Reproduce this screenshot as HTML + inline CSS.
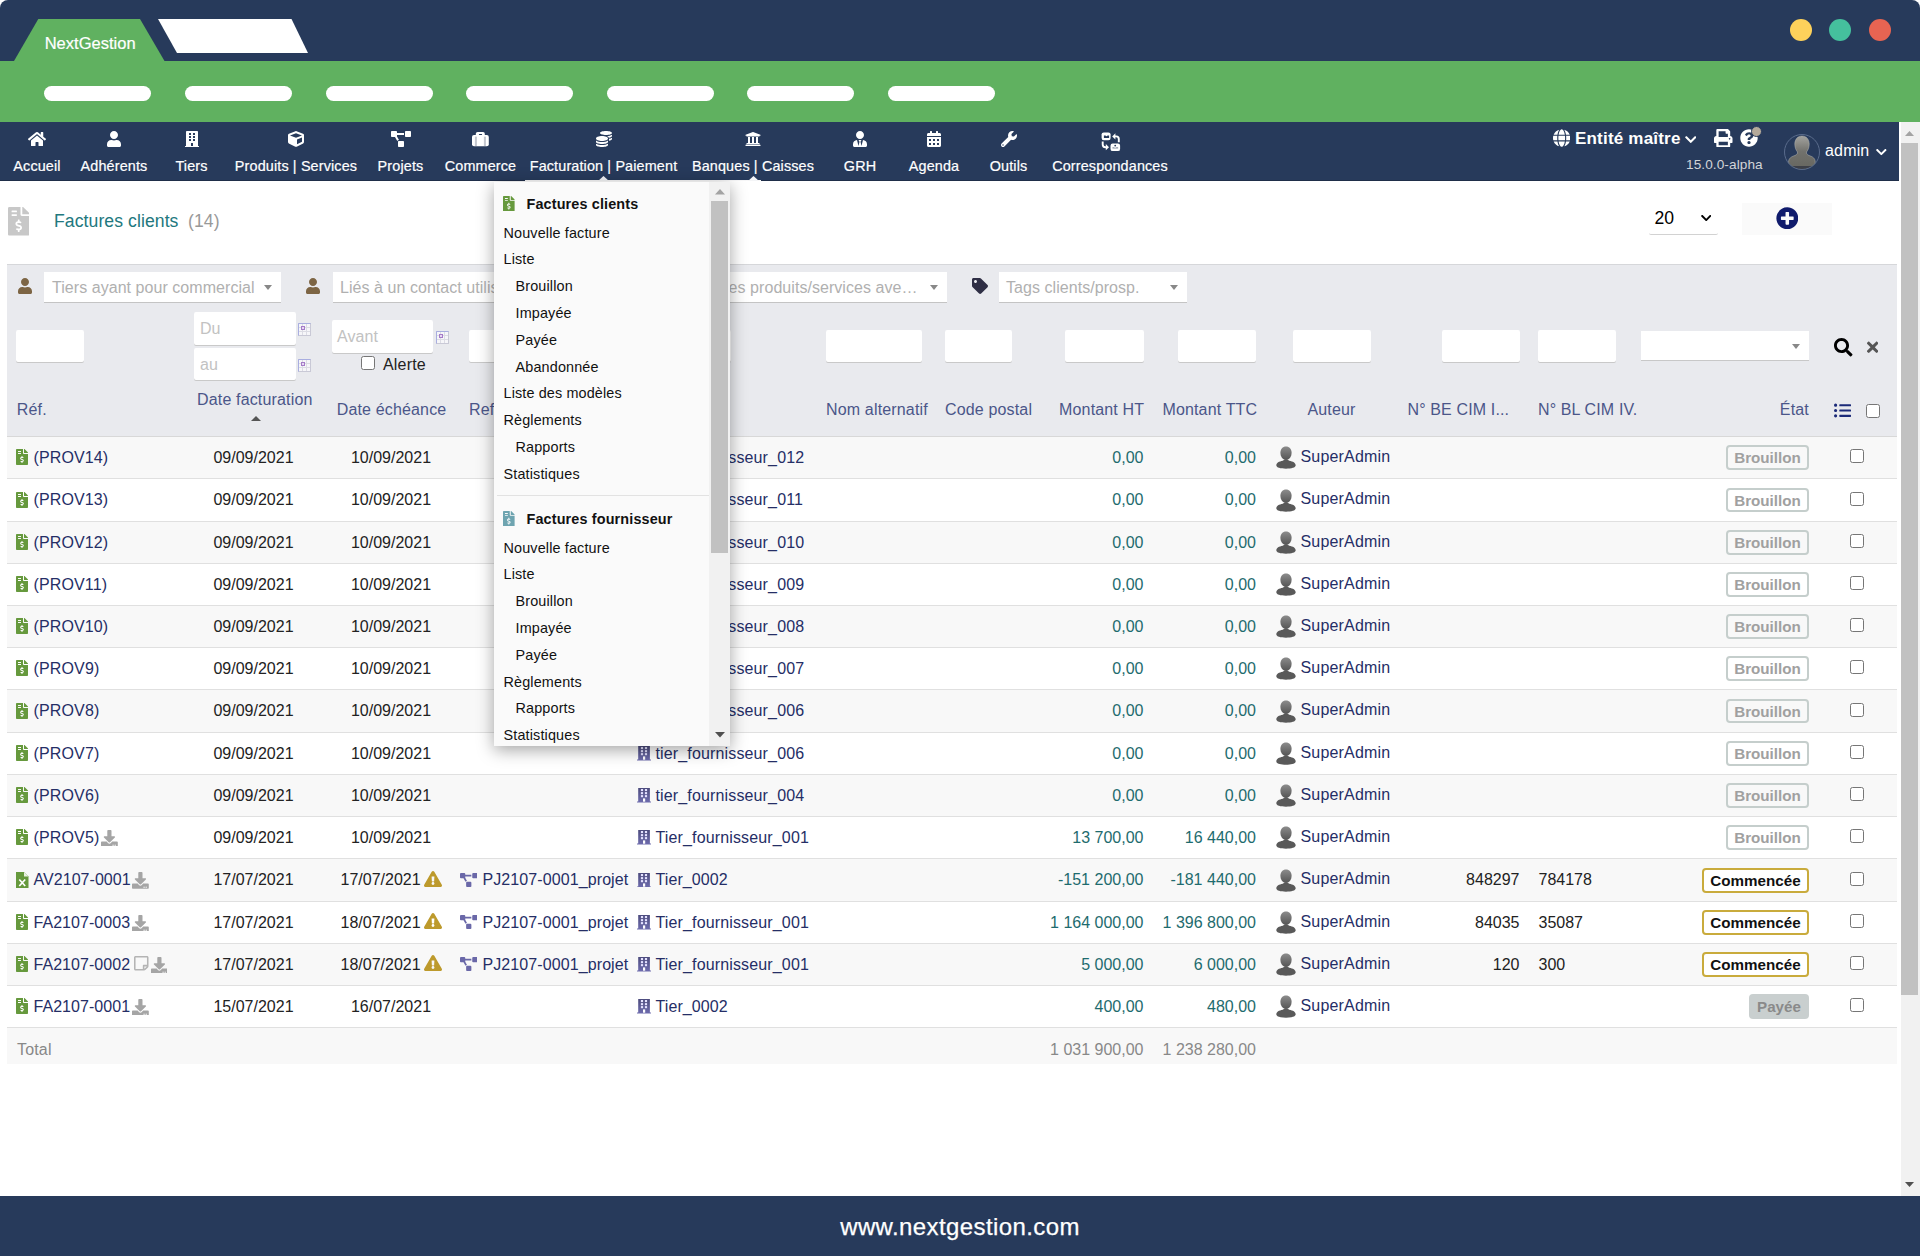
<!DOCTYPE html>
<html><head><meta charset="utf-8"><title>NextGestion</title><style>
*{box-sizing:border-box}
html,body{margin:0;padding:0}
body{width:1920px;height:1256px;overflow:hidden;position:relative;background:#fff;font-family:"Liberation Sans",sans-serif;font-size:16px;color:#000}
.a{position:absolute;display:block}
.t{position:absolute;white-space:nowrap;line-height:1.15}
.pill{position:absolute;top:86px;width:107px;height:15px;border-radius:8px;background:#fff}
.inp{position:absolute;background:#fff;border-radius:2px;box-shadow:0 1px 0 #c9c9c9}
.sel{position:absolute;background:#fff;border-bottom:1px solid #c4c4c4}
.tri{position:absolute;width:0;height:0;border-left:4.5px solid transparent;border-right:4.5px solid transparent;border-top:5px solid #888}
.cb{position:absolute;width:14px;height:14px;border:1px solid #767676;border-radius:2.5px;background:#fff}
.badge{position:absolute;height:24px;border-radius:4px;font-weight:bold;font-size:15.2px;line-height:21px;text-align:center;white-space:nowrap}
</style></head><body>
<div class="a" style="left:0;top:0;width:1920px;height:61px;background:#273a5b;border-radius:8px 8px 0 0"></div>
<svg class="a" style="left:0;top:0" width="320" height="62"><polygon points="14,61 38.3,19 140,19 164.5,61" fill="#60b160"/><polygon points="158,19 291.5,19 308,53 177,53" fill="#fff"/></svg>
<span class="t" style="left:44.7px;top:34.07px;font-size:16.5px;color:#fff;letter-spacing:0.02px;-webkit-text-stroke:0.2px #fff;">NextGestion</span>
<div class="a" style="left:0;top:61px;width:1920px;height:61px;background:#60b160"></div>
<div class="pill" style="left:44px"></div>
<div class="pill" style="left:185px"></div>
<div class="pill" style="left:326px"></div>
<div class="pill" style="left:466px"></div>
<div class="pill" style="left:607px"></div>
<div class="pill" style="left:747px"></div>
<div class="pill" style="left:888px"></div>
<div class="a" style="left:1790px;top:19px;width:22px;height:22px;border-radius:50%;background:#fdd15b"></div>
<div class="a" style="left:1829px;top:19px;width:22px;height:22px;border-radius:50%;background:#45c09d"></div>
<div class="a" style="left:1869px;top:19px;width:22px;height:22px;border-radius:50%;background:#e76452"></div>
<div class="a" style="left:0;top:122px;width:1899px;height:59px;background:#273a5b;border-bottom:1px solid #1f2e49"></div>
<svg class="a" style="left:28.0px;top:131px" width="18.00" height="16" viewBox="0 0 576 512"><path fill="#fff" d="M280.37 148.26L96 300.11V464a16 16 0 0 0 16 16l112.06-.29a16 16 0 0 0 15.92-16V368a16 16 0 0 1 16-16h64a16 16 0 0 1 16 16v95.64a16 16 0 0 0 16 16.05L464 480a16 16 0 0 0 16-16V300L295.67 148.26a12.19 12.19 0 0 0-15.3 0zM571.6 251.47L488 182.56V44.05a12 12 0 0 0-12-12h-56a12 12 0 0 0-12 12v72.61L318.47 43a48 48 0 0 0-61 0L4.34 251.47a12 12 0 0 0-1.6 16.9l25.5 31A12 12 0 0 0 45.15 301l235.22-193.74a12.19 12.19 0 0 1 15.3 0L530.9 301a12 12 0 0 0 16.9-1.6l25.5-31a12 12 0 0 0-1.7-16.93z"/></svg>
<span class="t" style="left:37px;transform:translateX(-50%);top:158.07px;font-size:14.4px;color:#fff;letter-spacing:0.14px;-webkit-text-stroke:0.2px #fff;">Accueil</span>
<svg class="a" style="left:107.0px;top:131px" width="14.00" height="16" viewBox="0 0 448 512"><path fill="#fff" d="M224 256c70.7 0 128-57.3 128-128S294.7 0 224 0 96 57.3 96 128s57.3 128 128 128zm89.6 32h-16.7c-22.2 10.2-46.9 16-72.9 16s-50.6-5.8-72.9-16h-16.7C60.2 288 0 348.2 0 422.4V464c0 26.5 21.5 48 48 48h352c26.5 0 48-21.5 48-48v-41.6c0-74.2-60.2-134.4-134.4-134.4z"/></svg>
<span class="t" style="left:114px;transform:translateX(-50%);top:158.07px;font-size:14.4px;color:#fff;letter-spacing:0.14px;-webkit-text-stroke:0.2px #fff;">Adhérents</span>
<svg class="a" style="left:184.5px;top:131px" width="14.00" height="16" viewBox="0 0 448 512"><path fill="#fff" d="M436 480h-20V24c0-13.255-10.745-24-24-24H56C42.745 0 32 10.745 32 24v456H12c-6.627 0-12 5.373-12 12v20h448v-20c0-6.627-5.373-12-12-12zM128 76c0-6.627 5.373-12 12-12h40c6.627 0 12 5.373 12 12v40c0 6.627-5.373 12-12 12h-40c-6.627 0-12-5.373-12-12V76zm0 96c0-6.627 5.373-12 12-12h40c6.627 0 12 5.373 12 12v40c0 6.627-5.373 12-12 12h-40c-6.627 0-12-5.373-12-12v-40zm52 148h-40c-6.627 0-12-5.373-12-12v-40c0-6.627 5.373-12 12-12h40c6.627 0 12 5.373 12 12v40c0 6.627-5.373 12-12 12zm76 160h-64v-84c0-6.627 5.373-12 12-12h40c6.627 0 12 5.373 12 12v84zm64-172c0 6.627-5.373 12-12 12h-40c-6.627 0-12-5.373-12-12v-40c0-6.627 5.373-12 12-12h40c6.627 0 12 5.373 12 12v40zm0-96c0 6.627-5.373 12-12 12h-40c-6.627 0-12-5.373-12-12v-40c0-6.627 5.373-12 12-12h40c6.627 0 12 5.373 12 12v40zm0-96c0 6.627-5.373 12-12 12h-40c-6.627 0-12-5.373-12-12V76c0-6.627 5.373-12 12-12h40c6.627 0 12 5.373 12 12v40z"/></svg>
<span class="t" style="left:191.5px;transform:translateX(-50%);top:158.07px;font-size:14.4px;color:#fff;letter-spacing:0.14px;-webkit-text-stroke:0.2px #fff;">Tiers</span>
<svg class="a" style="left:288.0px;top:131px" width="16.00" height="16" viewBox="0 0 512 512"><path fill="#fff" d="M239.1 6.3l-208 78c-18.7 7-31.1 25-31.1 45v225.1c0 18.2 10.3 34.8 26.5 42.9l208 104c13.5 6.8 29.4 6.8 42.9 0l208-104c16.3-8.1 26.5-24.8 26.5-42.9V129.3c0-20-12.4-37.9-31.1-44.9l-208-78C262 2.2 250 2.2 239.1 6.3zM256 68.4l192 72v1.1l-192 78-192-78v-1.1l192-72zm32 356V275.5l160-65v133.9l-160 80z"/></svg>
<span class="t" style="left:296px;transform:translateX(-50%);top:158.07px;font-size:14.4px;color:#fff;letter-spacing:0.14px;-webkit-text-stroke:0.2px #fff;">Produits | Services</span>
<svg class="a" style="left:390.5px;top:131px" width="20.00" height="16" viewBox="0 0 640 512"><path fill="#fff" d="M384 320H256c-17.67 0-32 14.33-32 32v128c0 17.67 14.33 32 32 32h128c17.67 0 32-14.33 32-32V352c0-17.67-14.33-32-32-32zM192 32c0-17.67-14.33-32-32-32H32C14.33 0 0 14.33 0 32v128c0 17.670 14.33 32 32 32h95.72l73.16 128.04C211.98 300.98 232.4 288 256 288h.28L192 175.51V128h224V64H192V32zM608 0H480c-17.67 0-32 14.33-32 32v128c0 17.67 14.33 32 32 32h128c17.67 0 32-14.33 32-32V32c0-17.67-14.33-32-32-32z"/></svg>
<span class="t" style="left:400.5px;transform:translateX(-50%);top:158.07px;font-size:14.4px;color:#fff;letter-spacing:0.14px;-webkit-text-stroke:0.2px #fff;">Projets</span>
<span class="t" style="left:480.5px;transform:translateX(-50%);top:158.07px;font-size:14.4px;color:#fff;letter-spacing:0.14px;-webkit-text-stroke:0.2px #fff;">Commerce</span>
<svg class="a" style="left:595.5px;top:131px" width="16.00" height="16" viewBox="0 0 512 512"><path fill="#fff" d="M0 405.3V448c0 35.3 86 64 192 64s192-28.7 192-64v-42.7C342.7 434.4 267.2 448 192 448S41.3 434.4 0 405.3zM320 128c106 0 192-28.7 192-64S426 0 320 0 128 28.7 128 64s86 64 192 64zM0 300.4V352c0 35.3 86 64 192 64s192-28.7 192-64v-51.6c-41.3 34-116.9 51.6-192 51.6S41.3 334.4 0 300.4zm416 11c57.3-11.1 96-31.7 96-55.4v-42.7c-23.2 16.4-57.3 27.6-96 34.5v63.6zM192 160C86 160 0 195.8 0 240s86 80 192 80 192-35.8 192-80-86-80-192-80zm219.3 56.3c60-10.8 100.7-32 100.7-56.3v-42.7c-35.5 25.1-96.5 38.6-160.7 41.8 29.5 14.3 51.2 33.5 60 57.2z"/></svg>
<span class="t" style="left:603.5px;transform:translateX(-50%);top:158.07px;font-size:14.4px;color:#fff;letter-spacing:0.14px;-webkit-text-stroke:0.2px #fff;">Facturation | Paiement</span>
<svg class="a" style="left:745.0px;top:131px" width="16.00" height="16" viewBox="0 0 512 512"><path fill="#fff" d="M496 128v16a8 8 0 0 1-8 8h-24v12c0 6.627-5.373 12-12 12H60c-6.627 0-12-5.373-12-12v-12H24a8 8 0 0 1-8-8v-16a8 8 0 0 1 4.941-7.392l232-88a7.996 7.996 0 0 1 6.118 0l232 88A8 8 0 0 1 496 128zm-24 304H40c-13.255 0-24 10.745-24 24v16a8 8 0 0 0 8 8h464a8 8 0 0 0 8-8v-16c0-13.255-10.745-24-24-24zM96 192v192H60c-6.627 0-12 5.373-12 12v20h416v-20c0-6.627-5.373-12-12-12h-36V192h-64v192h-64V192h-64v192h-64V192H96z"/></svg>
<span class="t" style="left:753px;transform:translateX(-50%);top:158.07px;font-size:14.4px;color:#fff;letter-spacing:0.14px;-webkit-text-stroke:0.2px #fff;">Banques | Caisses</span>
<svg class="a" style="left:853.0px;top:131px" width="14.00" height="16" viewBox="0 0 448 512"><path fill="#fff" d="M224 256c70.7 0 128-57.3 128-128S294.7 0 224 0 96 57.3 96 128s57.3 128 128 128zm95.8 32.6L272 480l-32-136 32-56h-96l32 56-32 136-47.8-191.4C56.9 292 0 350.3 0 422.4V464c0 26.5 21.5 48 48 48h352c26.5 0 48-21.5 48-48v-41.6c0-72.1-56.9-130.4-128.2-133.8z"/></svg>
<span class="t" style="left:860px;transform:translateX(-50%);top:158.07px;font-size:14.4px;color:#fff;letter-spacing:0.14px;-webkit-text-stroke:0.2px #fff;">GRH</span>
<svg class="a" style="left:927.0px;top:131px" width="14.00" height="16" viewBox="0 0 448 512"><path fill="#fff" d="M0 464c0 26.5 21.5 48 48 48h352c26.5 0 48-21.5 48-48V192H0v272zm320-196c0-6.6 5.4-12 12-12h40c6.6 0 12 5.4 12 12v40c0 6.6-5.4 12-12 12h-40c-6.6 0-12-5.4-12-12v-40zm0 128c0-6.6 5.4-12 12-12h40c6.6 0 12 5.4 12 12v40c0 6.6-5.4 12-12 12h-40c-6.6 0-12-5.4-12-12v-40zM192 268c0-6.6 5.4-12 12-12h40c6.6 0 12 5.4 12 12v40c0 6.6-5.4 12-12 12h-40c-6.6 0-12-5.4-12-12v-40zm0 128c0-6.6 5.4-12 12-12h40c6.6 0 12 5.4 12 12v40c0 6.6-5.4 12-12 12h-40c-6.6 0-12-5.4-12-12v-40zM64 268c0-6.6 5.4-12 12-12h40c6.6 0 12 5.4 12 12v40c0 6.6-5.4 12-12 12H76c-6.6 0-12-5.4-12-12v-40zm0 128c0-6.6 5.4-12 12-12h40c6.6 0 12 5.4 12 12v40c0 6.6-5.4 12-12 12H76c-6.6 0-12-5.4-12-12v-40zM400 64h-48V16c0-8.8-7.200-16-16-16h-32c-8.8 0-16 7.2-16 16v48H160V16c0-8.8-7.2-16-16-16h-32c-8.8 0-16 7.2-16 16v48H48C21.5 64 0 85.5 0 112v48h448v-48c0-26.5-21.5-48-48-48z"/></svg>
<span class="t" style="left:934px;transform:translateX(-50%);top:158.07px;font-size:14.4px;color:#fff;letter-spacing:0.14px;-webkit-text-stroke:0.2px #fff;">Agenda</span>
<svg class="a" style="left:1000.5px;top:131px" width="16.00" height="16" viewBox="0 0 512 512"><path fill="#fff" d="M507.73 109.1c-2.24-9.03-13.54-12.090-20.12-5.51l-74.36 74.36-67.88-11.31-11.31-67.88 74.36-74.36c6.62-6.62 3.43-17.9-5.66-20.16-47.38-11.74-99.55.91-136.58 37.93-39.64 39.640-50.55 97.1-34.05 147.2L18.74 402.76c-24.99 24.99-24.99 65.51 0 90.5 24.99 24.99 65.51 24.99 90.5 0l213.21-213.21c50.12 16.71 107.47 5.68 147.37-34.22 37.07-37.07 49.7-89.32 37.91-136.73zM64 472c-13.25 0-24-10.75-24-24 0-13.26 10.75-24 24-24s24 10.74 24 24c0 13.25-10.75 24-24 24z"/></svg>
<span class="t" style="left:1008.5px;transform:translateX(-50%);top:158.07px;font-size:14.4px;color:#fff;letter-spacing:0.14px;-webkit-text-stroke:0.2px #fff;">Outils</span>
<span class="t" style="left:1110px;transform:translateX(-50%);top:158.07px;font-size:14.4px;color:#fff;letter-spacing:0.14px;-webkit-text-stroke:0.2px #fff;">Correspondances</span>
<svg class="a" style="left:472.1px;top:131.9px" width="17" height="15" viewBox="0 0 17 15"><rect x="0" y="2.9" width="16.8" height="11.3" rx="2" fill="#fff"/><rect x="3.8" y="0" width="9" height="6" rx="1.8" fill="#fff"/><rect x="6.9" y="2.1" width="3.2" height="1" rx="0.5" fill="#273a5b"/><rect x="2.9" y="4.6" width="2" height="9.4" fill="#c3c6ce"/><rect x="11.9" y="4.6" width="2" height="9.4" fill="#c3c6ce"/></svg>
<svg class="a" style="left:1095px;top:126px" width="30" height="30" viewBox="0 0 30 30"><g fill="#fff"><rect x="6.6" y="6.4" width="9" height="7.8" rx="2.2"/><rect x="15.5" y="17.6" width="9.6" height="7.5" rx="2.2"/><path d="M17.2 10.4l3.2-3.1v6.2z"/><path d="M14 21.2l-3.2-3.1v6.2z"/></g><g fill="#273a5b"><path d="M8.9 9.6h1.6q1 1.3 2 0h1.6v2.3H8.9z"/><circle cx="20.2" cy="19.6" r="0.9"/><path d="M17.5 21.3h1.6q1.1 1 2.2 0h1.8v1.3h-5.6z" opacity="0.55"/></g><g fill="none" stroke="#fff" stroke-width="1.9"><path d="M23.8 16.2V13q0-2.6-2.6-2.6h-1.4"/><path d="M7.7 15.6v2.9q0 2.7 2.6 2.7h1.3"/></g></svg>
<div class="a" style="left:525px;top:180px;width:236px;height:1px;background:#f7f7f8"></div>
<svg class="a" style="left:597.5px;top:176px" width="11" height="5"><polygon points="0,5 5.5,0 11,5" fill="#f4f5f7"/></svg>
<svg class="a" style="left:748px;top:176px" width="11" height="5"><polygon points="0,5 5.5,0 11,5" fill="#f4f5f7"/></svg>
<svg class="a" style="left:1552.5px;top:129.2px" width="17.44" height="18" viewBox="0 0 496 512"><path fill="#fff" d="M336.5 160C322 70.7 287.8 8 248 8s-74 62.7-88.5 152h177zM152 256c0 22.2 1.2 43.5 3.3 64h185.3c2.1-20.5 3.3-41.8 3.3-64s-1.2-43.5-3.3-64H155.3c-2.1 20.5-3.3 41.8-3.3 64zm324.7-96c-28.6-67.9-86.5-120.4-158-141.6 24.4 33.8 41.2 84.7 50 141.6h108zM177.2 18.4C105.8 39.6 47.8 92.1 19.3 160h108c8.7-56.9 25.5-107.8 49.9-141.6zM487.4 192H372.7c2.1 21 3.3 42.5 3.3 64s-1.2 43-3.3 64h114.6c5.5-20.5 8.6-41.8 8.6-64s-3.1-43.5-8.5-64zM120 256c0-21.5 1.2-43 3.3-64H8.6C3.2 212.5 0 233.8 0 256s3.2 43.5 8.6 64h114.6c-2-21-3.2-42.5-3.2-64zm39.5 96c14.5 89.3 48.7 152 88.5 152s74-62.7 88.5-152h-177zm159.3 141.6c71.4-21.2 129.4-73.7 158-141.6h-108c-8.8 56.9-25.6 107.8-50 141.6zM19.3 352c28.6 67.9 86.5 120.4 158 141.6-24.4-33.8-41.2-84.7-50-141.6h-108z"/></svg>
<span class="t" style="left:1575px;top:129.22px;font-size:17px;color:#fff;font-weight:bold;letter-spacing:0.2px;">Entité maître</span>
<svg class="a" style="left:1684.5px;top:133.4px" width="11.55" height="13.2" viewBox="0 0 448 512"><path fill="#fff" d="M207.029 381.476L12.686 187.132c-9.373-9.373-9.373-24.569 0-33.941l22.667-22.667c9.357-9.357 24.522-9.375 33.901-.04L224 284.505l154.745-154.021c9.379-9.335 24.544-9.317 33.901.04l22.667 22.667c9.373 9.373 9.373 24.569 0 33.941L240.971 381.476c-9.373 9.372-24.569 9.372-33.942 0z"/></svg>
<svg class="a" style="left:1714px;top:128.9px" width="18.50" height="18.5" viewBox="0 0 512 512"><path fill="#fff" d="M448 192V77.25c0-8.49-3.37-16.62-9.37-22.63L393.37 9.37c-6-6-14.14-9.37-22.63-9.37H96C78.33 0 64 14.33 64 32v160c-35.35 0-64 28.65-64 64v112c0 8.84 7.16 16 16 16h48v96c0 17.67 14.33 32 32 32h320c17.67 0 32-14.330 32-32v-96h48c8.84 0 16-7.16 16-16V256c0-35.35-28.65-64-64-64zm-64 256H128v-96h256v96zm0-224H128V64h192v48c0 8.84 7.16 16 16 16h48v96zm48 72c-13.25 0-24-10.75-24-24 0-13.26 10.75-24 24-24s24 10.74 24 24c0 13.25-10.75 24-24 24z"/></svg>
<svg class="a" style="left:1740px;top:129.2px" width="18.00" height="18" viewBox="0 0 512 512"><path fill="#fff" d="M504 256c0 136.997-111.043 248-248 248S8 392.997 8 256C8 119.083 119.043 8 256 8s248 111.083 248 248zM262.655 90c-54.497 0-89.255 22.957-116.549 63.758-3.536 5.286-2.353 12.415 2.715 16.258l34.699 26.31c5.205 3.947 12.621 3.008 16.665-2.122 17.864-22.658 30.113-35.797 57.303-35.797 20.429 0 45.698 13.148 45.698 32.958 0 14.976-12.363 22.667-32.534 33.976C247.128 238.528 216 254.941 216 296v4c0 6.627 5.373 12 12 12h56c6.627 0 12-5.373 12-12v-1.333c0-28.462 83.186-29.647 83.186-106.667 0-58.002-60.165-102-116.531-102zM256 338c-25.365 0-46 20.635-46 46 0 25.364 20.635 46 46 46s46-20.636 46-46c0-25.365-20.635-46-46-46z"/></svg>
<div class="a" style="left:1751px;top:126px;width:11px;height:11px;border-radius:50%;background:#b4a99a;border:1px solid #273a5b"></div>
<span class="t" style="left:1686px;top:157.29px;font-size:13.6px;color:#d2d4d8;letter-spacing:0.096px;">15.0.0-alpha</span>
<svg class="a" style="left:1784px;top:134px" width="36" height="36" viewBox="0 0 36 36"><defs><clipPath id="cc"><circle cx="18" cy="18" r="17.6"/></clipPath><linearGradient id="ga" x1="0" y1="0" x2="0" y2="1"><stop offset="0" stop-color="#a3a39f"/><stop offset="0.45" stop-color="#72726d"/><stop offset="1" stop-color="#66665f"/></linearGradient></defs><g clip-path="url(#cc)"><path d="M18 2C22.5 2 25.2 5.6 25.2 10C25.2 13.5 24 16.2 22.5 18C22.2 19.5 23 20.6 25 21.5C29 22.7 31.2 24.5 31.2 28V36H4.6V28C4.6 24.5 7 22.7 11 21.5C13 20.6 13.8 19.5 13.5 18C12 16.2 10.8 13.5 10.8 10C10.8 5.6 13.5 2 18 2Z" fill="url(#ga)" stroke="#b8b8b4" stroke-width="0.5"/><rect x="4" y="32" width="28" height="4" fill="#3d4048"/></g><circle cx="18" cy="18" r="17.5" fill="none" stroke="#5a6c8c" stroke-width="1"/></svg>
<span class="t" style="left:1825px;top:141.52px;font-size:16px;color:#fff;letter-spacing:0.170px;">admin</span>
<svg class="a" style="left:1876px;top:145.6px" width="10.67" height="12.2" viewBox="0 0 448 512"><path fill="#fff" d="M207.029 381.476L12.686 187.132c-9.373-9.373-9.373-24.569 0-33.941l22.667-22.667c9.357-9.357 24.522-9.375 33.901-.04L224 284.505l154.745-154.021c9.379-9.335 24.544-9.317 33.901.04l22.667 22.667c9.373 9.373 9.373 24.569 0 33.941L240.971 381.476c-9.373 9.372-24.569 9.372-33.942 0z"/></svg>
<div class="a" style="left:0;top:1196px;width:1920px;height:60px;background:#273a5b"></div>
<span class="t" style="left:960px;transform:translateX(-50%);top:1212.78px;font-size:24px;color:#fff;letter-spacing:0.4px;-webkit-text-stroke:0.25px #fff;">www.nextgestion.com</span>
<div class="a" style="left:1901px;top:122px;width:19px;height:1074px;background:#f1f1f1"></div>
<div class="a" style="left:1901px;top:143px;width:17px;height:852px;background:#c1c1c1"></div>
<svg class="a" style="left:1905px;top:130.5px" width="9" height="5"><polygon points="0,5 4.5,0 9,5" fill="#a3a3a3"/></svg>
<svg class="a" style="left:1905px;top:1182px" width="9" height="5"><polygon points="0,0 4.5,5 9,0" fill="#505050"/></svg>
<svg class="a" style="left:8px;top:207.2px" width="21.45" height="28.6" viewBox="0 0 384 512"><path fill="#c8c8c8" d="M377 105L279.1 7c-4.5-4.5-10.6-7-17-7H256v128h128v-6.1c0-6.3-2.5-12.4-7-16.9zm-153 31V0H24C10.7 0 0 10.7 0 24v464c0 13.3 10.7 24 24 24h336c13.3 0 24-10.7 24-24V160H248c-13.2 0-24-10.8-24-24zM64 72c0-4.42 3.58-8 8-8h80c4.42 0 8 3.58 8 8v16c0 4.42-3.58 8-8 8H72c-4.42 0-8-3.58-8-8V72zm0 80v-16c0-4.42 3.58-8 8-8h80c4.42 0 8 3.58 8 8v16c0 4.42-3.58 8-8 8H72c-4.42 0-8-3.58-8-8zm144 263.88V440c0 4.42-3.58 8-8 8h-16c-4.42 0-8-3.58-8-8v-24.29c-11.29-.58-22.27-4.52-31.37-11.35-3.9-2.93-4.1-8.77-.57-12.14l11.75-11.21c2.77-2.64 6.89-2.76 10.13-.73 3.87 2.42 8.26 3.72 12.820 3.72h28.11c6.5 0 11.8-5.92 11.8-13.19 0-5.95-3.61-11.19-8.77-12.73l-45-13.5c-18.59-5.58-31.58-23.42-31.58-43.39 0-24.52 19.05-44.44 42.67-45.07V232c0-4.42 3.58-8 8-8h16c4.42 0 8 3.58 8 8v24.29c11.29.58 22.27 4.51 31.37 11.35 3.9 2.93 4.1 8.77.57 12.14l-11.75 11.21c-2.77 2.64-6.89 2.76-10.13.73-3.87-2.43-8.26-3.72-12.82-3.72h-28.11c-6.5 0-11.8 5.92-11.8 13.19 0 5.95 3.61 11.19 8.77 12.73l45 13.5c18.59 5.58 31.58 23.42 31.58 43.39 0 24.53-19.05 44.44-42.67 45.07z"/></svg>
<span class="t" style="left:54px;top:211.17px;font-size:17.6px;color:#22787e;letter-spacing:0.08px;">Factures clients</span>
<span class="t" style="left:188px;top:211.17px;font-size:17.6px;color:#999;letter-spacing:0.094px;">(14)</span>
<div class="a" style="left:1649px;top:204px;width:69px;height:31px;border-bottom:1px solid #d2d2d2;border-radius:0 0 2px 2px"></div>
<span class="t" style="left:1654.5px;top:207.77px;font-size:17.6px;color:#000;">20</span>
<svg class="a" style="left:1700.5px;top:211.5px" width="10.50" height="12" viewBox="0 0 448 512"><path fill="#000" d="M207.029 381.476L12.686 187.132c-9.373-9.373-9.373-24.569 0-33.941l22.667-22.667c9.357-9.357 24.522-9.375 33.901-.04L224 284.505l154.745-154.021c9.379-9.335 24.544-9.317 33.901.04l22.667 22.667c9.373 9.373 9.373 24.569 0 33.941L240.971 381.476c-9.373 9.372-24.569 9.372-33.942 0z"/></svg>
<div class="a" style="left:1742px;top:203px;width:90px;height:32px;background:#fafafa"></div>
<svg class="a" style="left:1775.7px;top:206.6px" width="22.60" height="22.6" viewBox="0 0 512 512"><path fill="#101b6c" d="M256 8C119 8 8 119 8 256s111 248 248 248 248-111 248-248S393 8 256 8zm144 276c0 6.6-5.4 12-12 12h-92v92c0 6.6-5.4 12-12 12h-56c-6.6 0-12-5.4-12-12v-92h-92c-6.6 0-12-5.4-12-12v-56c0-6.6 5.4-12 12-12h92v-92c0-6.6 5.4-12 12-12h56c6.6 0 12 5.4 12 12v92h92c6.6 0 12 5.4 12 12v56z"/></svg>
<div class="a" style="left:7px;top:264px;width:1890px;height:173px;background:#e9eaee;border-top:1px solid #d6d7da;border-bottom:1px solid #d8d8d8"></div>
<svg class="a" style="left:17.5px;top:278px" width="14.00" height="16" viewBox="0 0 448 512"><path fill="#7d6544" d="M224 256c70.7 0 128-57.3 128-128S294.7 0 224 0 96 57.3 96 128s57.3 128 128 128zm89.6 32h-16.7c-22.2 10.2-46.9 16-72.9 16s-50.6-5.8-72.9-16h-16.7C60.2 288 0 348.2 0 422.4V464c0 26.5 21.5 48 48 48h352c26.5 0 48-21.5 48-48v-41.6c0-74.2-60.2-134.4-134.4-134.4z"/></svg>
<div class="sel" style="left:44px;top:272px;width:237px;height:31px"></div>
<span class="t" style="left:52px;top:278.52px;font-size:16px;color:#b0b0b0;letter-spacing:0.05px;">Tiers ayant pour commercial</span>
<div class="tri" style="left:263.5px;top:285px"></div>
<svg class="a" style="left:305.8px;top:278px" width="14.00" height="16" viewBox="0 0 448 512"><path fill="#7d6544" d="M224 256c70.7 0 128-57.3 128-128S294.7 0 224 0 96 57.3 96 128s57.3 128 128 128zm89.6 32h-16.7c-22.2 10.2-46.9 16-72.9 16s-50.6-5.8-72.9-16h-16.7C60.2 288 0 348.2 0 422.4V464c0 26.5 21.5 48 48 48h352c26.5 0 48-21.5 48-48v-41.6c0-74.2-60.2-134.4-134.4-134.4z"/></svg>
<div class="sel" style="left:333px;top:272px;width:614px;height:31px"></div>
<span class="t" style="left:340px;top:278.52px;font-size:16px;color:#b0b0b0;letter-spacing:0.05px;">Liés à un contact utilisateur</span>
<span class="t" style="right:1002.5px;top:278.52px;font-size:16px;color:#b0b0b0;letter-spacing:0.05px;">Inclure les produits/services ave…</span>
<div class="tri" style="left:930px;top:285px"></div>
<svg class="a" style="left:971.5px;top:278px" width="16.00" height="16" viewBox="0 0 512 512"><path fill="#2f2f45" d="M0 252.118V48C0 21.49 21.49 0 48 0h204.118a48 48 0 0 1 33.941 14.059l211.882 211.882c18.745 18.745 18.745 49.137 0 67.882L293.823 497.941c-18.745 18.745-49.136 18.746-67.882 0L14.059 286.059A48 48 0 0 1 0 252.118zM112 64c-26.51 0-48 21.49-48 48s21.49 48 48 48 48-21.49 48-48-21.49-48-48-48z"/></svg>
<div class="sel" style="left:999px;top:272px;width:188px;height:31px"></div>
<span class="t" style="left:1006px;top:278.52px;font-size:16px;color:#b0b0b0;letter-spacing:0.05px;">Tags clients/prosp.</span>
<div class="tri" style="left:1170px;top:285px"></div>
<div class="inp" style="left:16px;top:330px;width:68px;height:32px"></div>
<div class="inp" style="left:194px;top:312px;width:102px;height:33px"></div>
<span class="t" style="left:200px;top:320.02px;font-size:16px;color:#c2c2c2;letter-spacing:0.05px;">Du</span>
<div class="inp" style="left:194px;top:348px;width:102px;height:32px"></div>
<span class="t" style="left:200px;top:355.52px;font-size:16px;color:#c2c2c2;letter-spacing:0.05px;">au</span>
<svg class="a" style="left:298px;top:322.5px" width="13" height="13" viewBox="0 0 13 13"><rect x="0.5" y="0.5" width="12" height="12" fill="#f6f6f9" stroke="#c9c9d6"/><path d="M0.5 0.5H12.5M0.5 0.5V12.5" stroke="#a9aee0" fill="none"/><path d="M4.5 1V12M8.5 1V12M1 4.5H12M1 8.5H12" stroke="#dcdce4"/><rect x="3.5" y="3.5" width="3" height="3" fill="#e8d8f4" stroke="#a57cc8"/></svg>
<svg class="a" style="left:298px;top:358.5px" width="13" height="13" viewBox="0 0 13 13"><rect x="0.5" y="0.5" width="12" height="12" fill="#f6f6f9" stroke="#c9c9d6"/><path d="M0.5 0.5H12.5M0.5 0.5V12.5" stroke="#a9aee0" fill="none"/><path d="M4.5 1V12M8.5 1V12M1 4.5H12M1 8.5H12" stroke="#dcdce4"/><rect x="3.5" y="3.5" width="3" height="3" fill="#e8d8f4" stroke="#a57cc8"/></svg>
<div class="inp" style="left:332px;top:320px;width:101px;height:33px"></div>
<span class="t" style="left:337px;top:327.72px;font-size:16px;color:#c2c2c2;letter-spacing:0.05px;">Avant</span>
<svg class="a" style="left:435.5px;top:331px" width="13" height="13" viewBox="0 0 13 13"><rect x="0.5" y="0.5" width="12" height="12" fill="#f6f6f9" stroke="#c9c9d6"/><path d="M0.5 0.5H12.5M0.5 0.5V12.5" stroke="#a9aee0" fill="none"/><path d="M4.5 1V12M8.5 1V12M1 4.5H12M1 8.5H12" stroke="#dcdce4"/><rect x="3.5" y="3.5" width="3" height="3" fill="#e8d8f4" stroke="#a57cc8"/></svg>
<div class="cb" style="left:361px;top:356px;width:13.5px;height:13.5px"></div>
<span class="t" style="left:383px;top:355.52px;font-size:16px;color:#222;letter-spacing:0.170px;">Alerte</span>
<div class="inp" style="left:469px;top:330px;width:262px;height:32px"></div>
<div class="inp" style="left:826px;top:330px;width:96px;height:32px"></div>
<div class="inp" style="left:945px;top:330px;width:67px;height:32px"></div>
<div class="inp" style="left:1065px;top:330px;width:79px;height:32px"></div>
<div class="inp" style="left:1178px;top:330px;width:78px;height:32px"></div>
<div class="inp" style="left:1293px;top:330px;width:78px;height:32px"></div>
<div class="inp" style="left:1442px;top:330px;width:78px;height:32px"></div>
<div class="inp" style="left:1538px;top:330px;width:78px;height:32px"></div>
<div class="sel" style="left:1641px;top:331px;width:168px;height:30px;border-bottom-color:#c8c8c8"></div>
<div class="tri" style="left:1792px;top:343.5px"></div>
<svg class="a" style="left:1834px;top:338px" width="18.50" height="18.5" viewBox="0 0 512 512"><path fill="#000" d="M505 442.7L405.3 343c-4.5-4.5-10.6-7-17-7H372c27.6-35.3 44-79.7 44-128C416 93.1 322.9 0 208 0S0 93.1 0 208s93.1 208 208 208c48.3 0 92.7-16.4 128-44v16.3c0 6.4 2.5 12.5 7 17l99.7 99.7c9.4 9.4 24.6 9.4 33.9 0l28.3-28.3c9.4-9.4 9.4-24.6.1-34zM208 336c-70.7 0-128-57.2-128-128 0-70.7 57.2-128 128-128 70.7 0 128 57.2 128 128 0 70.7-57.2 128-128 128z"/></svg>
<svg class="a" style="left:1866.5px;top:338.5px" width="11.34" height="16.5" viewBox="0 0 352 512"><path fill="#555" d="M242.72 256l100.07-100.07c12.28-12.28 12.28-32.19 0-44.48l-22.24-22.24c-12.28-12.28-32.19-12.28-44.48 0L176 189.28 75.93 89.21c-12.28-12.28-32.19-12.28-44.48 0L9.21 111.45c-12.28 12.28-12.28 32.19 0 44.48L109.28 256 9.21 356.07c-12.28 12.28-12.28 32.19 0 44.48l22.24 22.24c12.28 12.28 32.2 12.28 44.48 0L176 322.72l100.07 100.07c12.28 12.28 32.2 12.28 44.48 0l22.24-22.24c12.28-12.28 12.28-32.19 0-44.48L242.72 256z"/></svg>
<span class="t" style="left:16.8px;top:401.32px;font-size:16px;color:#4b5689;letter-spacing:0.170px;">Réf.</span>
<span class="t" style="left:197px;top:390.82px;font-size:16px;color:#4b5689;letter-spacing:0.159px;">Date facturation</span>
<div class="a" style="left:251px;top:415.5px;width:0;height:0;border-left:5px solid transparent;border-right:5px solid transparent;border-bottom:5px solid #555"></div>
<span class="t" style="left:336.7px;top:401.32px;font-size:16px;color:#4b5689;letter-spacing:0.157px;">Date échéance</span>
<span class="t" style="left:469px;top:401.32px;font-size:16px;color:#4b5689;letter-spacing:0.155px;">Ref. client</span>
<span class="t" style="left:826px;top:401.32px;font-size:16px;color:#4b5689;letter-spacing:0.158px;">Nom alternatif</span>
<span class="t" style="left:945px;top:401.32px;font-size:16px;color:#4b5689;letter-spacing:0.155px;">Code postal</span>
<span class="t" style="right:775.8px;top:401.32px;font-size:16px;color:#4b5689;letter-spacing:0.153px;">Montant HT</span>
<span class="t" style="right:662.8px;top:401.32px;font-size:16px;color:#4b5689;letter-spacing:0.155px;">Montant TTC</span>
<span class="t" style="left:1331.5px;transform:translateX(-50%);top:401.32px;font-size:16px;color:#4b5689;letter-spacing:0.170px;">Auteur</span>
<span class="t" style="left:1407.5px;top:401.32px;font-size:16px;color:#4b5689;letter-spacing:0.134px;">N° BE CIM I...</span>
<span class="t" style="left:1538px;top:401.32px;font-size:16px;color:#4b5689;letter-spacing:0.131px;">N° BL CIM IV.</span>
<span class="t" style="right:111px;top:401.32px;font-size:16px;color:#4b5689;letter-spacing:0.170px;">État</span>
<svg class="a" style="left:1834px;top:401.5px" width="17.00" height="17" viewBox="0 0 512 512"><path fill="#1b2a78" d="M48 48a48 48 0 1 0 48 48 48 48 0 0 0-48-48zm0 160a48 48 0 1 0 48 48 48 48 0 0 0-48-48zm0 160a48 48 0 1 0 48 48 48 48 0 0 0-48-48zm448 16H176a16 16 0 0 0-16 16v32a16 16 0 0 0 16 16h320a16 16 0 0 0 16-16v-32a16 16 0 0 0-16-16zm0-320H176a16 16 0 0 0-16 16v32a16 16 0 0 0 16 16h320a16 16 0 0 0 16-16V80a16 16 0 0 0-16-16zm0 160H176a16 16 0 0 0-16 16v32a16 16 0 0 0 16 16h320a16 16 0 0 0 16-16v-32a16 16 0 0 0-16-16z"/></svg>
<div class="cb" style="left:1866px;top:404px"></div>
<svg width="0" height="0" style="position:absolute"><defs><linearGradient id="bg1" x1="0" y1="0" x2="0" y2="1"><stop offset="0" stop-color="#4d4c7e"/><stop offset="1" stop-color="#6e6cae"/></linearGradient><linearGradient id="avg" x1="0" y1="0" x2="0" y2="1"><stop offset="0" stop-color="#8c8c8c"/><stop offset="1" stop-color="#555"/></linearGradient></defs></svg>
<div class="a" style="left:7px;top:437px;width:1890px;height:42px;background:#f8f8f8;border-bottom:1px solid #e0e0e0"></div>
<svg class="a" style="left:16px;top:449.0px" width="12.00" height="16" viewBox="0 0 384 512"><path fill="#66993d" d="M377 105L279.1 7c-4.5-4.5-10.6-7-17-7H256v128h128v-6.1c0-6.3-2.5-12.4-7-16.9zm-153 31V0H24C10.7 0 0 10.7 0 24v464c0 13.3 10.7 24 24 24h336c13.3 0 24-10.7 24-24V160H248c-13.2 0-24-10.8-24-24zM64 72c0-4.42 3.58-8 8-8h80c4.42 0 8 3.58 8 8v16c0 4.42-3.58 8-8 8H72c-4.42 0-8-3.58-8-8V72zm0 80v-16c0-4.42 3.58-8 8-8h80c4.42 0 8 3.58 8 8v16c0 4.42-3.58 8-8 8H72c-4.42 0-8-3.58-8-8zm144 263.88V440c0 4.42-3.58 8-8 8h-16c-4.42 0-8-3.58-8-8v-24.29c-11.29-.58-22.27-4.52-31.37-11.35-3.9-2.93-4.1-8.77-.57-12.14l11.75-11.21c2.77-2.64 6.89-2.76 10.13-.73 3.87 2.42 8.26 3.72 12.820 3.72h28.11c6.5 0 11.8-5.92 11.8-13.19 0-5.95-3.61-11.19-8.77-12.73l-45-13.5c-18.59-5.58-31.58-23.42-31.58-43.39 0-24.52 19.05-44.44 42.67-45.07V232c0-4.42 3.58-8 8-8h16c4.42 0 8 3.58 8 8v24.29c11.29.58 22.27 4.51 31.37 11.35 3.9 2.93 4.1 8.77.57 12.14l-11.75 11.21c-2.77 2.64-6.89 2.76-10.13.73-3.87-2.43-8.26-3.72-12.82-3.72h-28.11c-6.5 0-11.8 5.92-11.8 13.19 0 5.95 3.61 11.19 8.77 12.73l45 13.5c18.59 5.58 31.58 23.42 31.58 43.39 0 24.53-19.05 44.44-42.67 45.07z"/></svg>
<span class="t" style="left:33.5px;top:448.52px;font-size:16px;color:#252e66;letter-spacing:0.128px;">(PROV14)</span>
<span class="t" style="left:253.5px;transform:translateX(-50%);top:448.52px;font-size:16px;color:#222;">09/09/2021</span>
<span class="t" style="left:391px;transform:translateX(-50%);top:448.52px;font-size:16px;color:#222;">10/09/2021</span>
<svg class="a" style="left:636.9px;top:450.3px" width="14.2" height="14.6" viewBox="0 0 14.2 14.6"><path d="M1.2 0H12.9V13.6H14.2V14.6H0V13.6H1.2z" fill="url(#bg1)"/><g fill="#e4e2ff"><rect x="3.9" y="1" width="2.2" height="2.1"/><rect x="7.9" y="1" width="2.2" height="2.1"/><rect x="3.9" y="4.1" width="2.2" height="2.1"/><rect x="7.9" y="4.1" width="2.2" height="2.1"/><rect x="3.9" y="7.1" width="2.2" height="2.1"/><rect x="7.9" y="7.1" width="2.2" height="2.1"/></g><rect x="6" y="10.4" width="2.2" height="3.3" fill="#fff"/></svg>
<span class="t" style="left:655.5px;top:448.52px;font-size:16px;color:#252e66;letter-spacing:0.145px;">tier_fournisseur_012</span>
<span class="t" style="right:776.5px;top:448.52px;font-size:16px;color:#1e6b6e;">0,00</span>
<span class="t" style="right:664px;top:448.52px;font-size:16px;color:#1e6b6e;">0,00</span>
<svg class="a" style="left:1275.5px;top:446.00px" width="20" height="23" viewBox="0 0 20 23"><path d="M10 0.5c3.4 0 5.6 2.6 5.6 6.2 0 3.6-2 7.2-5.6 7.2S4.4 10.3 4.4 6.7C4.4 3.1 6.6 0.5 10 0.5z" fill="url(#avg)"/><path d="M10 13.5c1.6 0 2.2 0.5 3.2 1.2C17 15.4 19.7 16.8 19.7 19.3 19.7 21.7 15.5 22.7 10 22.7S0.3 21.7 0.3 19.3C0.3 16.8 3 15.4 6.8 14.7 7.8 14 8.4 13.5 10 13.5z" fill="#595959"/></svg>
<span class="t" style="left:1300.5px;top:447.52px;font-size:16px;color:#252e66;letter-spacing:0.170px;">SuperAdmin</span>
<div class="badge" style="left:1726px;top:445.40px;width:83px;height:24.3px;border:2px solid #c5cecc;color:#a0a0a0;background:transparent">Brouillon</div>
<div class="cb" style="left:1850px;top:449.40px"></div>
<div class="a" style="left:7px;top:479px;width:1890px;height:43px;background:#fff;border-bottom:1px solid #e0e0e0"></div>
<svg class="a" style="left:16px;top:491.5px" width="12.00" height="16" viewBox="0 0 384 512"><path fill="#66993d" d="M377 105L279.1 7c-4.5-4.5-10.6-7-17-7H256v128h128v-6.1c0-6.3-2.5-12.4-7-16.9zm-153 31V0H24C10.7 0 0 10.7 0 24v464c0 13.3 10.7 24 24 24h336c13.3 0 24-10.7 24-24V160H248c-13.2 0-24-10.8-24-24zM64 72c0-4.42 3.58-8 8-8h80c4.42 0 8 3.58 8 8v16c0 4.42-3.58 8-8 8H72c-4.42 0-8-3.58-8-8V72zm0 80v-16c0-4.42 3.58-8 8-8h80c4.42 0 8 3.58 8 8v16c0 4.42-3.58 8-8 8H72c-4.42 0-8-3.58-8-8zm144 263.88V440c0 4.42-3.58 8-8 8h-16c-4.42 0-8-3.58-8-8v-24.29c-11.29-.58-22.27-4.52-31.37-11.35-3.9-2.93-4.1-8.77-.57-12.14l11.75-11.21c2.77-2.64 6.89-2.76 10.13-.73 3.87 2.42 8.26 3.72 12.820 3.72h28.11c6.5 0 11.8-5.92 11.8-13.19 0-5.95-3.61-11.19-8.77-12.73l-45-13.5c-18.59-5.58-31.58-23.42-31.58-43.39 0-24.52 19.05-44.44 42.67-45.07V232c0-4.42 3.58-8 8-8h16c4.42 0 8 3.58 8 8v24.29c11.29.58 22.27 4.51 31.37 11.35 3.9 2.93 4.1 8.77.57 12.14l-11.75 11.21c-2.77 2.64-6.89 2.76-10.13.73-3.87-2.43-8.26-3.72-12.82-3.72h-28.11c-6.5 0-11.8 5.92-11.8 13.19 0 5.95 3.61 11.19 8.77 12.73l45 13.5c18.59 5.58 31.58 23.42 31.58 43.39 0 24.53-19.05 44.44-42.67 45.07z"/></svg>
<span class="t" style="left:33.5px;top:491.02px;font-size:16px;color:#252e66;letter-spacing:0.128px;">(PROV13)</span>
<span class="t" style="left:253.5px;transform:translateX(-50%);top:491.02px;font-size:16px;color:#222;">09/09/2021</span>
<span class="t" style="left:391px;transform:translateX(-50%);top:491.02px;font-size:16px;color:#222;">10/09/2021</span>
<svg class="a" style="left:636.9px;top:492.8px" width="14.2" height="14.6" viewBox="0 0 14.2 14.6"><path d="M1.2 0H12.9V13.6H14.2V14.6H0V13.6H1.2z" fill="url(#bg1)"/><g fill="#e4e2ff"><rect x="3.9" y="1" width="2.2" height="2.1"/><rect x="7.9" y="1" width="2.2" height="2.1"/><rect x="3.9" y="4.1" width="2.2" height="2.1"/><rect x="7.9" y="4.1" width="2.2" height="2.1"/><rect x="3.9" y="7.1" width="2.2" height="2.1"/><rect x="7.9" y="7.1" width="2.2" height="2.1"/></g><rect x="6" y="10.4" width="2.2" height="3.3" fill="#fff"/></svg>
<span class="t" style="left:655.5px;top:491.02px;font-size:16px;color:#252e66;letter-spacing:0.145px;">tier_fournisseur_011</span>
<span class="t" style="right:776.5px;top:491.02px;font-size:16px;color:#1e6b6e;">0,00</span>
<span class="t" style="right:664px;top:491.02px;font-size:16px;color:#1e6b6e;">0,00</span>
<svg class="a" style="left:1275.5px;top:488.50px" width="20" height="23" viewBox="0 0 20 23"><path d="M10 0.5c3.4 0 5.6 2.6 5.6 6.2 0 3.6-2 7.2-5.6 7.2S4.4 10.3 4.4 6.7C4.4 3.1 6.6 0.5 10 0.5z" fill="url(#avg)"/><path d="M10 13.5c1.6 0 2.2 0.5 3.2 1.2C17 15.4 19.7 16.8 19.7 19.3 19.7 21.7 15.5 22.7 10 22.7S0.3 21.7 0.3 19.3C0.3 16.8 3 15.4 6.8 14.7 7.8 14 8.4 13.5 10 13.5z" fill="#595959"/></svg>
<span class="t" style="left:1300.5px;top:490.02px;font-size:16px;color:#252e66;letter-spacing:0.170px;">SuperAdmin</span>
<div class="badge" style="left:1726px;top:487.90px;width:83px;height:24.3px;border:2px solid #c5cecc;color:#a0a0a0;background:transparent">Brouillon</div>
<div class="cb" style="left:1850px;top:491.90px"></div>
<div class="a" style="left:7px;top:522px;width:1890px;height:42px;background:#f8f8f8;border-bottom:1px solid #e0e0e0"></div>
<svg class="a" style="left:16px;top:534.0px" width="12.00" height="16" viewBox="0 0 384 512"><path fill="#66993d" d="M377 105L279.1 7c-4.5-4.5-10.6-7-17-7H256v128h128v-6.1c0-6.3-2.5-12.4-7-16.9zm-153 31V0H24C10.7 0 0 10.7 0 24v464c0 13.3 10.7 24 24 24h336c13.3 0 24-10.7 24-24V160H248c-13.2 0-24-10.8-24-24zM64 72c0-4.42 3.58-8 8-8h80c4.42 0 8 3.58 8 8v16c0 4.42-3.58 8-8 8H72c-4.42 0-8-3.58-8-8V72zm0 80v-16c0-4.42 3.58-8 8-8h80c4.42 0 8 3.58 8 8v16c0 4.42-3.58 8-8 8H72c-4.42 0-8-3.58-8-8zm144 263.88V440c0 4.42-3.58 8-8 8h-16c-4.42 0-8-3.58-8-8v-24.29c-11.29-.58-22.27-4.52-31.37-11.35-3.9-2.93-4.1-8.77-.57-12.14l11.75-11.21c2.77-2.64 6.89-2.76 10.13-.73 3.87 2.42 8.26 3.72 12.820 3.72h28.11c6.5 0 11.8-5.92 11.8-13.19 0-5.95-3.61-11.19-8.77-12.73l-45-13.5c-18.59-5.58-31.58-23.42-31.58-43.39 0-24.52 19.05-44.44 42.67-45.07V232c0-4.42 3.58-8 8-8h16c4.42 0 8 3.58 8 8v24.29c11.29.58 22.27 4.51 31.37 11.35 3.9 2.93 4.1 8.77.57 12.14l-11.75 11.21c-2.77 2.64-6.89 2.76-10.13.73-3.87-2.43-8.26-3.72-12.82-3.72h-28.11c-6.5 0-11.8 5.92-11.8 13.19 0 5.95 3.61 11.19 8.77 12.73l45 13.5c18.59 5.58 31.58 23.42 31.58 43.39 0 24.53-19.05 44.44-42.67 45.07z"/></svg>
<span class="t" style="left:33.5px;top:533.52px;font-size:16px;color:#252e66;letter-spacing:0.128px;">(PROV12)</span>
<span class="t" style="left:253.5px;transform:translateX(-50%);top:533.52px;font-size:16px;color:#222;">09/09/2021</span>
<span class="t" style="left:391px;transform:translateX(-50%);top:533.52px;font-size:16px;color:#222;">10/09/2021</span>
<svg class="a" style="left:636.9px;top:535.3px" width="14.2" height="14.6" viewBox="0 0 14.2 14.6"><path d="M1.2 0H12.9V13.6H14.2V14.6H0V13.6H1.2z" fill="url(#bg1)"/><g fill="#e4e2ff"><rect x="3.9" y="1" width="2.2" height="2.1"/><rect x="7.9" y="1" width="2.2" height="2.1"/><rect x="3.9" y="4.1" width="2.2" height="2.1"/><rect x="7.9" y="4.1" width="2.2" height="2.1"/><rect x="3.9" y="7.1" width="2.2" height="2.1"/><rect x="7.9" y="7.1" width="2.2" height="2.1"/></g><rect x="6" y="10.4" width="2.2" height="3.3" fill="#fff"/></svg>
<span class="t" style="left:655.5px;top:533.52px;font-size:16px;color:#252e66;letter-spacing:0.145px;">tier_fournisseur_010</span>
<span class="t" style="right:776.5px;top:533.52px;font-size:16px;color:#1e6b6e;">0,00</span>
<span class="t" style="right:664px;top:533.52px;font-size:16px;color:#1e6b6e;">0,00</span>
<svg class="a" style="left:1275.5px;top:531.00px" width="20" height="23" viewBox="0 0 20 23"><path d="M10 0.5c3.4 0 5.6 2.6 5.6 6.2 0 3.6-2 7.2-5.6 7.2S4.4 10.3 4.4 6.7C4.4 3.1 6.6 0.5 10 0.5z" fill="url(#avg)"/><path d="M10 13.5c1.6 0 2.2 0.5 3.2 1.2C17 15.4 19.7 16.8 19.7 19.3 19.7 21.7 15.5 22.7 10 22.7S0.3 21.7 0.3 19.3C0.3 16.8 3 15.4 6.8 14.7 7.8 14 8.4 13.5 10 13.5z" fill="#595959"/></svg>
<span class="t" style="left:1300.5px;top:532.52px;font-size:16px;color:#252e66;letter-spacing:0.170px;">SuperAdmin</span>
<div class="badge" style="left:1726px;top:530.40px;width:83px;height:24.3px;border:2px solid #c5cecc;color:#a0a0a0;background:transparent">Brouillon</div>
<div class="cb" style="left:1850px;top:534.40px"></div>
<div class="a" style="left:7px;top:564px;width:1890px;height:42px;background:#fff;border-bottom:1px solid #e0e0e0"></div>
<svg class="a" style="left:16px;top:576.0px" width="12.00" height="16" viewBox="0 0 384 512"><path fill="#66993d" d="M377 105L279.1 7c-4.5-4.5-10.6-7-17-7H256v128h128v-6.1c0-6.3-2.5-12.4-7-16.9zm-153 31V0H24C10.7 0 0 10.7 0 24v464c0 13.3 10.7 24 24 24h336c13.3 0 24-10.7 24-24V160H248c-13.2 0-24-10.8-24-24zM64 72c0-4.42 3.58-8 8-8h80c4.42 0 8 3.58 8 8v16c0 4.42-3.58 8-8 8H72c-4.42 0-8-3.58-8-8V72zm0 80v-16c0-4.42 3.58-8 8-8h80c4.42 0 8 3.58 8 8v16c0 4.42-3.58 8-8 8H72c-4.42 0-8-3.58-8-8zm144 263.88V440c0 4.42-3.58 8-8 8h-16c-4.42 0-8-3.58-8-8v-24.29c-11.29-.58-22.27-4.52-31.37-11.35-3.9-2.93-4.1-8.77-.57-12.14l11.75-11.21c2.77-2.64 6.89-2.76 10.13-.73 3.87 2.42 8.26 3.72 12.820 3.72h28.11c6.5 0 11.8-5.92 11.8-13.19 0-5.95-3.61-11.19-8.77-12.73l-45-13.5c-18.59-5.58-31.58-23.42-31.58-43.39 0-24.52 19.05-44.44 42.67-45.07V232c0-4.42 3.58-8 8-8h16c4.42 0 8 3.58 8 8v24.29c11.29.58 22.27 4.51 31.37 11.35 3.9 2.93 4.1 8.77.57 12.14l-11.75 11.21c-2.77 2.64-6.89 2.76-10.13.73-3.87-2.43-8.26-3.72-12.82-3.72h-28.11c-6.5 0-11.8 5.92-11.8 13.19 0 5.95 3.61 11.19 8.77 12.73l45 13.5c18.59 5.58 31.58 23.42 31.58 43.39 0 24.53-19.05 44.44-42.67 45.07z"/></svg>
<span class="t" style="left:33.5px;top:575.52px;font-size:16px;color:#252e66;letter-spacing:0.128px;">(PROV11)</span>
<span class="t" style="left:253.5px;transform:translateX(-50%);top:575.52px;font-size:16px;color:#222;">09/09/2021</span>
<span class="t" style="left:391px;transform:translateX(-50%);top:575.52px;font-size:16px;color:#222;">10/09/2021</span>
<svg class="a" style="left:636.9px;top:577.3px" width="14.2" height="14.6" viewBox="0 0 14.2 14.6"><path d="M1.2 0H12.9V13.6H14.2V14.6H0V13.6H1.2z" fill="url(#bg1)"/><g fill="#e4e2ff"><rect x="3.9" y="1" width="2.2" height="2.1"/><rect x="7.9" y="1" width="2.2" height="2.1"/><rect x="3.9" y="4.1" width="2.2" height="2.1"/><rect x="7.9" y="4.1" width="2.2" height="2.1"/><rect x="3.9" y="7.1" width="2.2" height="2.1"/><rect x="7.9" y="7.1" width="2.2" height="2.1"/></g><rect x="6" y="10.4" width="2.2" height="3.3" fill="#fff"/></svg>
<span class="t" style="left:655.5px;top:575.52px;font-size:16px;color:#252e66;letter-spacing:0.145px;">tier_fournisseur_009</span>
<span class="t" style="right:776.5px;top:575.52px;font-size:16px;color:#1e6b6e;">0,00</span>
<span class="t" style="right:664px;top:575.52px;font-size:16px;color:#1e6b6e;">0,00</span>
<svg class="a" style="left:1275.5px;top:573.00px" width="20" height="23" viewBox="0 0 20 23"><path d="M10 0.5c3.4 0 5.6 2.6 5.6 6.2 0 3.6-2 7.2-5.6 7.2S4.4 10.3 4.4 6.7C4.4 3.1 6.6 0.5 10 0.5z" fill="url(#avg)"/><path d="M10 13.5c1.6 0 2.2 0.5 3.2 1.2C17 15.4 19.7 16.8 19.7 19.3 19.7 21.7 15.5 22.7 10 22.7S0.3 21.7 0.3 19.3C0.3 16.8 3 15.4 6.8 14.7 7.8 14 8.4 13.5 10 13.5z" fill="#595959"/></svg>
<span class="t" style="left:1300.5px;top:574.52px;font-size:16px;color:#252e66;letter-spacing:0.170px;">SuperAdmin</span>
<div class="badge" style="left:1726px;top:572.40px;width:83px;height:24.3px;border:2px solid #c5cecc;color:#a0a0a0;background:transparent">Brouillon</div>
<div class="cb" style="left:1850px;top:576.40px"></div>
<div class="a" style="left:7px;top:606px;width:1890px;height:42px;background:#f8f8f8;border-bottom:1px solid #e0e0e0"></div>
<svg class="a" style="left:16px;top:618.0px" width="12.00" height="16" viewBox="0 0 384 512"><path fill="#66993d" d="M377 105L279.1 7c-4.5-4.5-10.6-7-17-7H256v128h128v-6.1c0-6.3-2.5-12.4-7-16.9zm-153 31V0H24C10.7 0 0 10.7 0 24v464c0 13.3 10.7 24 24 24h336c13.3 0 24-10.7 24-24V160H248c-13.2 0-24-10.8-24-24zM64 72c0-4.42 3.58-8 8-8h80c4.42 0 8 3.58 8 8v16c0 4.42-3.58 8-8 8H72c-4.42 0-8-3.58-8-8V72zm0 80v-16c0-4.42 3.58-8 8-8h80c4.42 0 8 3.58 8 8v16c0 4.42-3.58 8-8 8H72c-4.42 0-8-3.58-8-8zm144 263.88V440c0 4.42-3.58 8-8 8h-16c-4.42 0-8-3.58-8-8v-24.29c-11.29-.58-22.27-4.52-31.37-11.35-3.9-2.93-4.1-8.77-.57-12.14l11.75-11.21c2.77-2.64 6.89-2.76 10.13-.73 3.87 2.42 8.26 3.72 12.820 3.72h28.11c6.5 0 11.8-5.92 11.8-13.19 0-5.95-3.61-11.19-8.77-12.73l-45-13.5c-18.59-5.58-31.58-23.42-31.58-43.39 0-24.52 19.05-44.44 42.67-45.07V232c0-4.42 3.58-8 8-8h16c4.42 0 8 3.58 8 8v24.29c11.29.58 22.27 4.51 31.37 11.35 3.9 2.93 4.1 8.77.57 12.14l-11.75 11.21c-2.77 2.64-6.89 2.76-10.13.73-3.87-2.43-8.26-3.72-12.82-3.72h-28.11c-6.5 0-11.8 5.92-11.8 13.19 0 5.95 3.61 11.19 8.77 12.73l45 13.5c18.59 5.58 31.58 23.42 31.58 43.39 0 24.53-19.05 44.44-42.67 45.07z"/></svg>
<span class="t" style="left:33.5px;top:617.52px;font-size:16px;color:#252e66;letter-spacing:0.128px;">(PROV10)</span>
<span class="t" style="left:253.5px;transform:translateX(-50%);top:617.52px;font-size:16px;color:#222;">09/09/2021</span>
<span class="t" style="left:391px;transform:translateX(-50%);top:617.52px;font-size:16px;color:#222;">10/09/2021</span>
<svg class="a" style="left:636.9px;top:619.3px" width="14.2" height="14.6" viewBox="0 0 14.2 14.6"><path d="M1.2 0H12.9V13.6H14.2V14.6H0V13.6H1.2z" fill="url(#bg1)"/><g fill="#e4e2ff"><rect x="3.9" y="1" width="2.2" height="2.1"/><rect x="7.9" y="1" width="2.2" height="2.1"/><rect x="3.9" y="4.1" width="2.2" height="2.1"/><rect x="7.9" y="4.1" width="2.2" height="2.1"/><rect x="3.9" y="7.1" width="2.2" height="2.1"/><rect x="7.9" y="7.1" width="2.2" height="2.1"/></g><rect x="6" y="10.4" width="2.2" height="3.3" fill="#fff"/></svg>
<span class="t" style="left:655.5px;top:617.52px;font-size:16px;color:#252e66;letter-spacing:0.145px;">tier_fournisseur_008</span>
<span class="t" style="right:776.5px;top:617.52px;font-size:16px;color:#1e6b6e;">0,00</span>
<span class="t" style="right:664px;top:617.52px;font-size:16px;color:#1e6b6e;">0,00</span>
<svg class="a" style="left:1275.5px;top:615.00px" width="20" height="23" viewBox="0 0 20 23"><path d="M10 0.5c3.4 0 5.6 2.6 5.6 6.2 0 3.6-2 7.2-5.6 7.2S4.4 10.3 4.4 6.7C4.4 3.1 6.6 0.5 10 0.5z" fill="url(#avg)"/><path d="M10 13.5c1.6 0 2.2 0.5 3.2 1.2C17 15.4 19.7 16.8 19.7 19.3 19.7 21.7 15.5 22.7 10 22.7S0.3 21.7 0.3 19.3C0.3 16.8 3 15.4 6.8 14.7 7.8 14 8.4 13.5 10 13.5z" fill="#595959"/></svg>
<span class="t" style="left:1300.5px;top:616.52px;font-size:16px;color:#252e66;letter-spacing:0.170px;">SuperAdmin</span>
<div class="badge" style="left:1726px;top:614.40px;width:83px;height:24.3px;border:2px solid #c5cecc;color:#a0a0a0;background:transparent">Brouillon</div>
<div class="cb" style="left:1850px;top:618.40px"></div>
<div class="a" style="left:7px;top:648px;width:1890px;height:42px;background:#fff;border-bottom:1px solid #e0e0e0"></div>
<svg class="a" style="left:16px;top:660.0px" width="12.00" height="16" viewBox="0 0 384 512"><path fill="#66993d" d="M377 105L279.1 7c-4.5-4.5-10.6-7-17-7H256v128h128v-6.1c0-6.3-2.5-12.4-7-16.9zm-153 31V0H24C10.7 0 0 10.7 0 24v464c0 13.3 10.7 24 24 24h336c13.3 0 24-10.7 24-24V160H248c-13.2 0-24-10.8-24-24zM64 72c0-4.42 3.58-8 8-8h80c4.42 0 8 3.58 8 8v16c0 4.42-3.58 8-8 8H72c-4.42 0-8-3.58-8-8V72zm0 80v-16c0-4.42 3.58-8 8-8h80c4.42 0 8 3.58 8 8v16c0 4.42-3.58 8-8 8H72c-4.42 0-8-3.58-8-8zm144 263.88V440c0 4.42-3.58 8-8 8h-16c-4.42 0-8-3.58-8-8v-24.29c-11.29-.58-22.27-4.52-31.37-11.35-3.9-2.93-4.1-8.77-.57-12.14l11.75-11.21c2.77-2.64 6.89-2.76 10.13-.73 3.87 2.42 8.26 3.72 12.820 3.72h28.11c6.5 0 11.8-5.92 11.8-13.19 0-5.95-3.61-11.19-8.77-12.73l-45-13.5c-18.59-5.58-31.58-23.42-31.58-43.39 0-24.52 19.05-44.44 42.67-45.07V232c0-4.42 3.58-8 8-8h16c4.42 0 8 3.58 8 8v24.29c11.29.58 22.27 4.51 31.37 11.35 3.9 2.93 4.1 8.77.57 12.14l-11.75 11.21c-2.77 2.64-6.89 2.76-10.13.73-3.87-2.43-8.26-3.72-12.82-3.72h-28.11c-6.5 0-11.8 5.92-11.8 13.19 0 5.95 3.61 11.19 8.77 12.73l45 13.5c18.59 5.58 31.58 23.42 31.58 43.39 0 24.53-19.05 44.44-42.67 45.07z"/></svg>
<span class="t" style="left:33.5px;top:659.52px;font-size:16px;color:#252e66;letter-spacing:0.146px;">(PROV9)</span>
<span class="t" style="left:253.5px;transform:translateX(-50%);top:659.52px;font-size:16px;color:#222;">09/09/2021</span>
<span class="t" style="left:391px;transform:translateX(-50%);top:659.52px;font-size:16px;color:#222;">10/09/2021</span>
<svg class="a" style="left:636.9px;top:661.3px" width="14.2" height="14.6" viewBox="0 0 14.2 14.6"><path d="M1.2 0H12.9V13.6H14.2V14.6H0V13.6H1.2z" fill="url(#bg1)"/><g fill="#e4e2ff"><rect x="3.9" y="1" width="2.2" height="2.1"/><rect x="7.9" y="1" width="2.2" height="2.1"/><rect x="3.9" y="4.1" width="2.2" height="2.1"/><rect x="7.9" y="4.1" width="2.2" height="2.1"/><rect x="3.9" y="7.1" width="2.2" height="2.1"/><rect x="7.9" y="7.1" width="2.2" height="2.1"/></g><rect x="6" y="10.4" width="2.2" height="3.3" fill="#fff"/></svg>
<span class="t" style="left:655.5px;top:659.52px;font-size:16px;color:#252e66;letter-spacing:0.145px;">tier_fournisseur_007</span>
<span class="t" style="right:776.5px;top:659.52px;font-size:16px;color:#1e6b6e;">0,00</span>
<span class="t" style="right:664px;top:659.52px;font-size:16px;color:#1e6b6e;">0,00</span>
<svg class="a" style="left:1275.5px;top:657.00px" width="20" height="23" viewBox="0 0 20 23"><path d="M10 0.5c3.4 0 5.6 2.6 5.6 6.2 0 3.6-2 7.2-5.6 7.2S4.4 10.3 4.4 6.7C4.4 3.1 6.6 0.5 10 0.5z" fill="url(#avg)"/><path d="M10 13.5c1.6 0 2.2 0.5 3.2 1.2C17 15.4 19.7 16.8 19.7 19.3 19.7 21.7 15.5 22.7 10 22.7S0.3 21.7 0.3 19.3C0.3 16.8 3 15.4 6.8 14.7 7.8 14 8.4 13.5 10 13.5z" fill="#595959"/></svg>
<span class="t" style="left:1300.5px;top:658.52px;font-size:16px;color:#252e66;letter-spacing:0.170px;">SuperAdmin</span>
<div class="badge" style="left:1726px;top:656.40px;width:83px;height:24.3px;border:2px solid #c5cecc;color:#a0a0a0;background:transparent">Brouillon</div>
<div class="cb" style="left:1850px;top:660.40px"></div>
<div class="a" style="left:7px;top:690px;width:1890px;height:43px;background:#f8f8f8;border-bottom:1px solid #e0e0e0"></div>
<svg class="a" style="left:16px;top:702.5px" width="12.00" height="16" viewBox="0 0 384 512"><path fill="#66993d" d="M377 105L279.1 7c-4.5-4.5-10.6-7-17-7H256v128h128v-6.1c0-6.3-2.5-12.4-7-16.9zm-153 31V0H24C10.7 0 0 10.7 0 24v464c0 13.3 10.7 24 24 24h336c13.3 0 24-10.7 24-24V160H248c-13.2 0-24-10.8-24-24zM64 72c0-4.42 3.58-8 8-8h80c4.42 0 8 3.58 8 8v16c0 4.42-3.58 8-8 8H72c-4.42 0-8-3.58-8-8V72zm0 80v-16c0-4.42 3.58-8 8-8h80c4.42 0 8 3.58 8 8v16c0 4.42-3.58 8-8 8H72c-4.42 0-8-3.58-8-8zm144 263.88V440c0 4.42-3.58 8-8 8h-16c-4.42 0-8-3.58-8-8v-24.29c-11.29-.58-22.27-4.52-31.37-11.35-3.9-2.93-4.1-8.77-.57-12.14l11.75-11.21c2.77-2.64 6.89-2.76 10.13-.73 3.87 2.42 8.26 3.72 12.820 3.72h28.11c6.5 0 11.8-5.92 11.8-13.19 0-5.95-3.61-11.19-8.77-12.73l-45-13.5c-18.59-5.58-31.58-23.42-31.58-43.39 0-24.52 19.05-44.44 42.67-45.07V232c0-4.42 3.58-8 8-8h16c4.42 0 8 3.58 8 8v24.29c11.29.58 22.27 4.51 31.37 11.35 3.9 2.93 4.1 8.77.57 12.14l-11.75 11.21c-2.77 2.64-6.89 2.76-10.13.73-3.87-2.43-8.26-3.72-12.82-3.72h-28.11c-6.5 0-11.8 5.92-11.8 13.19 0 5.95 3.61 11.19 8.77 12.73l45 13.5c18.59 5.58 31.58 23.42 31.58 43.39 0 24.53-19.05 44.44-42.67 45.07z"/></svg>
<span class="t" style="left:33.5px;top:702.02px;font-size:16px;color:#252e66;letter-spacing:0.146px;">(PROV8)</span>
<span class="t" style="left:253.5px;transform:translateX(-50%);top:702.02px;font-size:16px;color:#222;">09/09/2021</span>
<span class="t" style="left:391px;transform:translateX(-50%);top:702.02px;font-size:16px;color:#222;">10/09/2021</span>
<svg class="a" style="left:636.9px;top:703.8px" width="14.2" height="14.6" viewBox="0 0 14.2 14.6"><path d="M1.2 0H12.9V13.6H14.2V14.6H0V13.6H1.2z" fill="url(#bg1)"/><g fill="#e4e2ff"><rect x="3.9" y="1" width="2.2" height="2.1"/><rect x="7.9" y="1" width="2.2" height="2.1"/><rect x="3.9" y="4.1" width="2.2" height="2.1"/><rect x="7.9" y="4.1" width="2.2" height="2.1"/><rect x="3.9" y="7.1" width="2.2" height="2.1"/><rect x="7.9" y="7.1" width="2.2" height="2.1"/></g><rect x="6" y="10.4" width="2.2" height="3.3" fill="#fff"/></svg>
<span class="t" style="left:655.5px;top:702.02px;font-size:16px;color:#252e66;letter-spacing:0.145px;">tier_fournisseur_006</span>
<span class="t" style="right:776.5px;top:702.02px;font-size:16px;color:#1e6b6e;">0,00</span>
<span class="t" style="right:664px;top:702.02px;font-size:16px;color:#1e6b6e;">0,00</span>
<svg class="a" style="left:1275.5px;top:699.50px" width="20" height="23" viewBox="0 0 20 23"><path d="M10 0.5c3.4 0 5.6 2.6 5.6 6.2 0 3.6-2 7.2-5.6 7.2S4.4 10.3 4.4 6.7C4.4 3.1 6.6 0.5 10 0.5z" fill="url(#avg)"/><path d="M10 13.5c1.6 0 2.2 0.5 3.2 1.2C17 15.4 19.7 16.8 19.7 19.3 19.7 21.7 15.5 22.7 10 22.7S0.3 21.7 0.3 19.3C0.3 16.8 3 15.4 6.8 14.7 7.8 14 8.4 13.5 10 13.5z" fill="#595959"/></svg>
<span class="t" style="left:1300.5px;top:701.02px;font-size:16px;color:#252e66;letter-spacing:0.170px;">SuperAdmin</span>
<div class="badge" style="left:1726px;top:698.90px;width:83px;height:24.3px;border:2px solid #c5cecc;color:#a0a0a0;background:transparent">Brouillon</div>
<div class="cb" style="left:1850px;top:702.90px"></div>
<div class="a" style="left:7px;top:733px;width:1890px;height:42px;background:#fff;border-bottom:1px solid #e0e0e0"></div>
<svg class="a" style="left:16px;top:745.0px" width="12.00" height="16" viewBox="0 0 384 512"><path fill="#66993d" d="M377 105L279.1 7c-4.5-4.5-10.6-7-17-7H256v128h128v-6.1c0-6.3-2.5-12.4-7-16.9zm-153 31V0H24C10.7 0 0 10.7 0 24v464c0 13.3 10.7 24 24 24h336c13.3 0 24-10.7 24-24V160H248c-13.2 0-24-10.8-24-24zM64 72c0-4.42 3.58-8 8-8h80c4.42 0 8 3.58 8 8v16c0 4.42-3.58 8-8 8H72c-4.42 0-8-3.58-8-8V72zm0 80v-16c0-4.42 3.58-8 8-8h80c4.42 0 8 3.58 8 8v16c0 4.42-3.58 8-8 8H72c-4.42 0-8-3.58-8-8zm144 263.88V440c0 4.42-3.58 8-8 8h-16c-4.42 0-8-3.58-8-8v-24.29c-11.29-.58-22.27-4.52-31.37-11.35-3.9-2.93-4.1-8.77-.57-12.14l11.75-11.21c2.77-2.64 6.89-2.76 10.13-.73 3.87 2.42 8.26 3.72 12.820 3.72h28.11c6.5 0 11.8-5.92 11.8-13.19 0-5.95-3.61-11.19-8.77-12.73l-45-13.5c-18.59-5.58-31.58-23.42-31.58-43.39 0-24.52 19.05-44.44 42.67-45.07V232c0-4.42 3.58-8 8-8h16c4.42 0 8 3.58 8 8v24.29c11.29.58 22.27 4.51 31.37 11.35 3.9 2.93 4.1 8.77.57 12.14l-11.75 11.21c-2.77 2.64-6.89 2.76-10.13.73-3.87-2.43-8.26-3.72-12.82-3.72h-28.11c-6.5 0-11.8 5.92-11.8 13.19 0 5.95 3.61 11.19 8.77 12.73l45 13.5c18.59 5.58 31.58 23.42 31.58 43.39 0 24.53-19.05 44.44-42.67 45.07z"/></svg>
<span class="t" style="left:33.5px;top:744.52px;font-size:16px;color:#252e66;letter-spacing:0.146px;">(PROV7)</span>
<span class="t" style="left:253.5px;transform:translateX(-50%);top:744.52px;font-size:16px;color:#222;">09/09/2021</span>
<span class="t" style="left:391px;transform:translateX(-50%);top:744.52px;font-size:16px;color:#222;">10/09/2021</span>
<svg class="a" style="left:636.9px;top:746.3px" width="14.2" height="14.6" viewBox="0 0 14.2 14.6"><path d="M1.2 0H12.9V13.6H14.2V14.6H0V13.6H1.2z" fill="url(#bg1)"/><g fill="#e4e2ff"><rect x="3.9" y="1" width="2.2" height="2.1"/><rect x="7.9" y="1" width="2.2" height="2.1"/><rect x="3.9" y="4.1" width="2.2" height="2.1"/><rect x="7.9" y="4.1" width="2.2" height="2.1"/><rect x="3.9" y="7.1" width="2.2" height="2.1"/><rect x="7.9" y="7.1" width="2.2" height="2.1"/></g><rect x="6" y="10.4" width="2.2" height="3.3" fill="#fff"/></svg>
<span class="t" style="left:655.5px;top:744.52px;font-size:16px;color:#252e66;letter-spacing:0.145px;">tier_fournisseur_006</span>
<span class="t" style="right:776.5px;top:744.52px;font-size:16px;color:#1e6b6e;">0,00</span>
<span class="t" style="right:664px;top:744.52px;font-size:16px;color:#1e6b6e;">0,00</span>
<svg class="a" style="left:1275.5px;top:742.00px" width="20" height="23" viewBox="0 0 20 23"><path d="M10 0.5c3.4 0 5.6 2.6 5.6 6.2 0 3.6-2 7.2-5.6 7.2S4.4 10.3 4.4 6.7C4.4 3.1 6.6 0.5 10 0.5z" fill="url(#avg)"/><path d="M10 13.5c1.6 0 2.2 0.5 3.2 1.2C17 15.4 19.7 16.8 19.7 19.3 19.7 21.7 15.5 22.7 10 22.7S0.3 21.7 0.3 19.3C0.3 16.8 3 15.4 6.8 14.7 7.8 14 8.4 13.5 10 13.5z" fill="#595959"/></svg>
<span class="t" style="left:1300.5px;top:743.52px;font-size:16px;color:#252e66;letter-spacing:0.170px;">SuperAdmin</span>
<div class="badge" style="left:1726px;top:741.40px;width:83px;height:24.3px;border:2px solid #c5cecc;color:#a0a0a0;background:transparent">Brouillon</div>
<div class="cb" style="left:1850px;top:745.40px"></div>
<div class="a" style="left:7px;top:775px;width:1890px;height:42px;background:#f8f8f8;border-bottom:1px solid #e0e0e0"></div>
<svg class="a" style="left:16px;top:787.0px" width="12.00" height="16" viewBox="0 0 384 512"><path fill="#66993d" d="M377 105L279.1 7c-4.5-4.5-10.6-7-17-7H256v128h128v-6.1c0-6.3-2.5-12.4-7-16.9zm-153 31V0H24C10.7 0 0 10.7 0 24v464c0 13.3 10.7 24 24 24h336c13.3 0 24-10.7 24-24V160H248c-13.2 0-24-10.8-24-24zM64 72c0-4.42 3.58-8 8-8h80c4.42 0 8 3.58 8 8v16c0 4.42-3.58 8-8 8H72c-4.42 0-8-3.58-8-8V72zm0 80v-16c0-4.42 3.58-8 8-8h80c4.42 0 8 3.58 8 8v16c0 4.42-3.58 8-8 8H72c-4.42 0-8-3.58-8-8zm144 263.88V440c0 4.42-3.58 8-8 8h-16c-4.42 0-8-3.58-8-8v-24.29c-11.29-.58-22.27-4.52-31.37-11.35-3.9-2.93-4.1-8.77-.57-12.14l11.75-11.21c2.77-2.64 6.89-2.76 10.13-.73 3.87 2.42 8.26 3.72 12.820 3.72h28.11c6.5 0 11.8-5.92 11.8-13.19 0-5.95-3.61-11.19-8.77-12.73l-45-13.5c-18.59-5.58-31.58-23.42-31.58-43.39 0-24.52 19.05-44.44 42.67-45.07V232c0-4.42 3.58-8 8-8h16c4.42 0 8 3.58 8 8v24.29c11.29.58 22.27 4.51 31.37 11.35 3.9 2.93 4.1 8.77.57 12.14l-11.75 11.21c-2.77 2.64-6.89 2.76-10.13.73-3.87-2.43-8.26-3.72-12.82-3.72h-28.11c-6.5 0-11.8 5.92-11.8 13.19 0 5.95 3.61 11.19 8.77 12.73l45 13.5c18.59 5.58 31.58 23.42 31.58 43.39 0 24.53-19.05 44.44-42.67 45.07z"/></svg>
<span class="t" style="left:33.5px;top:786.52px;font-size:16px;color:#252e66;letter-spacing:0.146px;">(PROV6)</span>
<span class="t" style="left:253.5px;transform:translateX(-50%);top:786.52px;font-size:16px;color:#222;">09/09/2021</span>
<span class="t" style="left:391px;transform:translateX(-50%);top:786.52px;font-size:16px;color:#222;">10/09/2021</span>
<svg class="a" style="left:636.9px;top:788.3px" width="14.2" height="14.6" viewBox="0 0 14.2 14.6"><path d="M1.2 0H12.9V13.6H14.2V14.6H0V13.6H1.2z" fill="url(#bg1)"/><g fill="#e4e2ff"><rect x="3.9" y="1" width="2.2" height="2.1"/><rect x="7.9" y="1" width="2.2" height="2.1"/><rect x="3.9" y="4.1" width="2.2" height="2.1"/><rect x="7.9" y="4.1" width="2.2" height="2.1"/><rect x="3.9" y="7.1" width="2.2" height="2.1"/><rect x="7.9" y="7.1" width="2.2" height="2.1"/></g><rect x="6" y="10.4" width="2.2" height="3.3" fill="#fff"/></svg>
<span class="t" style="left:655.5px;top:786.52px;font-size:16px;color:#252e66;letter-spacing:0.145px;">tier_fournisseur_004</span>
<span class="t" style="right:776.5px;top:786.52px;font-size:16px;color:#1e6b6e;">0,00</span>
<span class="t" style="right:664px;top:786.52px;font-size:16px;color:#1e6b6e;">0,00</span>
<svg class="a" style="left:1275.5px;top:784.00px" width="20" height="23" viewBox="0 0 20 23"><path d="M10 0.5c3.4 0 5.6 2.6 5.6 6.2 0 3.6-2 7.2-5.6 7.2S4.4 10.3 4.4 6.7C4.4 3.1 6.6 0.5 10 0.5z" fill="url(#avg)"/><path d="M10 13.5c1.6 0 2.2 0.5 3.2 1.2C17 15.4 19.7 16.8 19.7 19.3 19.7 21.7 15.5 22.7 10 22.7S0.3 21.7 0.3 19.3C0.3 16.8 3 15.4 6.8 14.7 7.8 14 8.4 13.5 10 13.5z" fill="#595959"/></svg>
<span class="t" style="left:1300.5px;top:785.52px;font-size:16px;color:#252e66;letter-spacing:0.170px;">SuperAdmin</span>
<div class="badge" style="left:1726px;top:783.40px;width:83px;height:24.3px;border:2px solid #c5cecc;color:#a0a0a0;background:transparent">Brouillon</div>
<div class="cb" style="left:1850px;top:787.40px"></div>
<div class="a" style="left:7px;top:817px;width:1890px;height:42px;background:#fff;border-bottom:1px solid #e0e0e0"></div>
<svg class="a" style="left:16px;top:829.0px" width="12.00" height="16" viewBox="0 0 384 512"><path fill="#66993d" d="M377 105L279.1 7c-4.5-4.5-10.6-7-17-7H256v128h128v-6.1c0-6.3-2.5-12.4-7-16.9zm-153 31V0H24C10.7 0 0 10.7 0 24v464c0 13.3 10.7 24 24 24h336c13.3 0 24-10.7 24-24V160H248c-13.2 0-24-10.8-24-24zM64 72c0-4.42 3.58-8 8-8h80c4.42 0 8 3.58 8 8v16c0 4.42-3.58 8-8 8H72c-4.42 0-8-3.58-8-8V72zm0 80v-16c0-4.42 3.58-8 8-8h80c4.42 0 8 3.58 8 8v16c0 4.42-3.58 8-8 8H72c-4.42 0-8-3.58-8-8zm144 263.88V440c0 4.42-3.58 8-8 8h-16c-4.42 0-8-3.58-8-8v-24.29c-11.29-.58-22.27-4.52-31.37-11.35-3.9-2.93-4.1-8.77-.57-12.14l11.75-11.21c2.77-2.64 6.89-2.76 10.13-.73 3.87 2.42 8.26 3.72 12.820 3.72h28.11c6.5 0 11.8-5.92 11.8-13.19 0-5.95-3.61-11.19-8.77-12.73l-45-13.5c-18.59-5.58-31.58-23.42-31.58-43.39 0-24.52 19.05-44.44 42.67-45.07V232c0-4.42 3.58-8 8-8h16c4.42 0 8 3.58 8 8v24.29c11.29.58 22.27 4.51 31.37 11.35 3.9 2.93 4.1 8.77.57 12.14l-11.75 11.21c-2.77 2.64-6.89 2.76-10.13.73-3.87-2.43-8.26-3.72-12.82-3.72h-28.11c-6.5 0-11.8 5.92-11.8 13.19 0 5.95 3.61 11.19 8.77 12.73l45 13.5c18.59 5.58 31.58 23.42 31.58 43.39 0 24.53-19.05 44.44-42.67 45.07z"/></svg>
<span class="t" style="left:33.5px;top:828.52px;font-size:16px;color:#252e66;letter-spacing:0.146px;">(PROV5)</span>
<svg class="a" style="left:101px;top:829.5px" width="16.80" height="16.8" viewBox="0 0 512 512"><path fill="#a5a5a5" d="M216 0h80c13.3 0 24 10.7 24 24v168h87.7c17.8 0 26.7 21.5 14.1 34.1L269.7 378.3c-7.5 7.5-19.8 7.5-27.3 0L90.1 226.1c-12.6-12.6-3.7-34.1 14.1-34.1H192V24c0-13.3 10.7-24 24-24zm296 376v112c0 13.3-10.7 24-24 24H24c-13.3 0-24-10.7-24-24V376c0-13.3 10.7-24 24-24h146.7l49 49c20.1 20.1 52.5 20.1 72.6 0l49-49H488c13.3 0 24 10.7 24 24zm-124 88c0-11-9-20-20-20s-20 9-20 20 9 20 20 20 20-9 20-20zm64 0c0-11-9-20-20-20s-20 9-20 20 9 20 20 20 20-9 20-20z"/></svg>
<span class="t" style="left:253.5px;transform:translateX(-50%);top:828.52px;font-size:16px;color:#222;">09/09/2021</span>
<span class="t" style="left:391px;transform:translateX(-50%);top:828.52px;font-size:16px;color:#222;">10/09/2021</span>
<svg class="a" style="left:636.9px;top:830.3px" width="14.2" height="14.6" viewBox="0 0 14.2 14.6"><path d="M1.2 0H12.9V13.6H14.2V14.6H0V13.6H1.2z" fill="url(#bg1)"/><g fill="#e4e2ff"><rect x="3.9" y="1" width="2.2" height="2.1"/><rect x="7.9" y="1" width="2.2" height="2.1"/><rect x="3.9" y="4.1" width="2.2" height="2.1"/><rect x="7.9" y="4.1" width="2.2" height="2.1"/><rect x="3.9" y="7.1" width="2.2" height="2.1"/><rect x="7.9" y="7.1" width="2.2" height="2.1"/></g><rect x="6" y="10.4" width="2.2" height="3.3" fill="#fff"/></svg>
<span class="t" style="left:655.5px;top:828.52px;font-size:16px;color:#252e66;letter-spacing:0.145px;">Tier_fournisseur_001</span>
<span class="t" style="right:776.5px;top:828.52px;font-size:16px;color:#1e6b6e;">13 700,00</span>
<span class="t" style="right:664px;top:828.52px;font-size:16px;color:#1e6b6e;">16 440,00</span>
<svg class="a" style="left:1275.5px;top:826.00px" width="20" height="23" viewBox="0 0 20 23"><path d="M10 0.5c3.4 0 5.6 2.6 5.6 6.2 0 3.6-2 7.2-5.6 7.2S4.4 10.3 4.4 6.7C4.4 3.1 6.6 0.5 10 0.5z" fill="url(#avg)"/><path d="M10 13.5c1.6 0 2.2 0.5 3.2 1.2C17 15.4 19.7 16.8 19.7 19.3 19.7 21.7 15.5 22.7 10 22.7S0.3 21.7 0.3 19.3C0.3 16.8 3 15.4 6.8 14.7 7.8 14 8.4 13.5 10 13.5z" fill="#595959"/></svg>
<span class="t" style="left:1300.5px;top:827.52px;font-size:16px;color:#252e66;letter-spacing:0.170px;">SuperAdmin</span>
<div class="badge" style="left:1726px;top:825.40px;width:83px;height:24.3px;border:2px solid #c5cecc;color:#a0a0a0;background:transparent">Brouillon</div>
<div class="cb" style="left:1850px;top:829.40px"></div>
<div class="a" style="left:7px;top:859px;width:1890px;height:43px;background:#f8f8f8;border-bottom:1px solid #e0e0e0"></div>
<svg class="a" style="left:16px;top:871.50px" width="12.5" height="16" viewBox="0 0 12.5 16"><path d="M0 0h8l4.5 4.5V16H0z" fill="#66993d"/><path d="M8 0v4.5h4.5" fill="#e8f0e0"/><path d="M3.3 7.5l5.9 6.5M9.2 7.5l-5.9 6.5" stroke="#fff" stroke-width="1.7"/></svg>
<span class="t" style="left:33.5px;top:871.02px;font-size:16px;color:#252e66;letter-spacing:0.046px;">AV2107-0001</span>
<svg class="a" style="left:132.4px;top:872.0px" width="16.80" height="16.8" viewBox="0 0 512 512"><path fill="#a5a5a5" d="M216 0h80c13.3 0 24 10.7 24 24v168h87.7c17.8 0 26.7 21.5 14.1 34.1L269.7 378.3c-7.5 7.5-19.8 7.5-27.3 0L90.1 226.1c-12.6-12.6-3.7-34.1 14.1-34.1H192V24c0-13.3 10.7-24 24-24zm296 376v112c0 13.3-10.7 24-24 24H24c-13.3 0-24-10.7-24-24V376c0-13.3 10.7-24 24-24h146.7l49 49c20.1 20.1 52.5 20.1 72.6 0l49-49H488c13.3 0 24 10.7 24 24zm-124 88c0-11-9-20-20-20s-20 9-20 20 9 20 20 20 20-9 20-20zm64 0c0-11-9-20-20-20s-20 9-20 20 9 20 20 20 20-9 20-20z"/></svg>
<span class="t" style="left:253.5px;transform:translateX(-50%);top:871.02px;font-size:16px;color:#222;">17/07/2021</span>
<span class="t" style="left:340.5px;top:871.02px;font-size:16px;color:#222;">17/07/2021</span>
<svg class="a" style="left:423.5px;top:870.75px" width="18.00" height="16" viewBox="0 0 576 512"><path fill="#bd9a2c" d="M569.517 440.013C587.975 472.007 564.806 512 527.94 512H48.054c-36.937 0-59.999-40.055-41.577-71.987L246.423 23.985c18.467-32.009 64.72-31.951 83.154 0l239.94 416.028zM288 354c-25.405 0-46 20.595-46 46s20.595 46 46 46 46-20.595 46-46-20.595-46-46-46zm-43.673-165.346l7.418 136c.347 6.364 5.609 11.346 11.982 11.346h48.546c6.373 0 11.635-4.982 11.982-11.346l7.418-136c.375-6.874-5.098-12.654-11.982-12.654h-63.383c-6.884 0-12.356 5.78-11.981 12.654z"/></svg>
<svg class="a" style="left:459.5px;top:872.9px" width="17.50" height="14" viewBox="0 0 640 512"><path fill="#6a68a8" d="M384 320H256c-17.67 0-32 14.33-32 32v128c0 17.67 14.33 32 32 32h128c17.67 0 32-14.33 32-32V352c0-17.67-14.33-32-32-32zM192 32c0-17.67-14.33-32-32-32H32C14.33 0 0 14.33 0 32v128c0 17.670 14.33 32 32 32h95.72l73.16 128.04C211.98 300.98 232.4 288 256 288h.28L192 175.51V128h224V64H192V32zM608 0H480c-17.67 0-32 14.33-32 32v128c0 17.67 14.33 32 32 32h128c17.67 0 32-14.33 32-32V32c0-17.67-14.33-32-32-32z"/></svg>
<span class="t" style="left:482.5px;top:871.02px;font-size:16px;color:#252e66;letter-spacing:0.094px;">PJ2107-0001_projet</span>
<svg class="a" style="left:636.9px;top:872.8px" width="14.2" height="14.6" viewBox="0 0 14.2 14.6"><path d="M1.2 0H12.9V13.6H14.2V14.6H0V13.6H1.2z" fill="url(#bg1)"/><g fill="#e4e2ff"><rect x="3.9" y="1" width="2.2" height="2.1"/><rect x="7.9" y="1" width="2.2" height="2.1"/><rect x="3.9" y="4.1" width="2.2" height="2.1"/><rect x="7.9" y="4.1" width="2.2" height="2.1"/><rect x="3.9" y="7.1" width="2.2" height="2.1"/><rect x="7.9" y="7.1" width="2.2" height="2.1"/></g><rect x="6" y="10.4" width="2.2" height="3.3" fill="#fff"/></svg>
<span class="t" style="left:655.5px;top:871.02px;font-size:16px;color:#252e66;letter-spacing:0.094px;">Tier_0002</span>
<span class="t" style="right:776.5px;top:871.02px;font-size:16px;color:#1e6b6e;letter-spacing:0.015px;">-151 200,00</span>
<span class="t" style="right:664px;top:871.02px;font-size:16px;color:#1e6b6e;letter-spacing:0.015px;">-181 440,00</span>
<svg class="a" style="left:1275.5px;top:868.50px" width="20" height="23" viewBox="0 0 20 23"><path d="M10 0.5c3.4 0 5.6 2.6 5.6 6.2 0 3.6-2 7.2-5.6 7.2S4.4 10.3 4.4 6.7C4.4 3.1 6.6 0.5 10 0.5z" fill="url(#avg)"/><path d="M10 13.5c1.6 0 2.2 0.5 3.2 1.2C17 15.4 19.7 16.8 19.7 19.3 19.7 21.7 15.5 22.7 10 22.7S0.3 21.7 0.3 19.3C0.3 16.8 3 15.4 6.8 14.7 7.8 14 8.4 13.5 10 13.5z" fill="#595959"/></svg>
<span class="t" style="left:1300.5px;top:870.02px;font-size:16px;color:#252e66;letter-spacing:0.170px;">SuperAdmin</span>
<span class="t" style="right:400.5px;top:871.02px;font-size:16px;color:#222;">848297</span>
<span class="t" style="left:1538.5px;top:871.02px;font-size:16px;color:#222;">784178</span>
<div class="badge" style="left:1702px;top:867.50px;width:107px;height:25px;line-height:21.5px;border:2px solid #c9ab3c;color:#111;background:#fff">Commencée</div>
<div class="cb" style="left:1850px;top:871.90px"></div>
<div class="a" style="left:7px;top:902px;width:1890px;height:42px;background:#fff;border-bottom:1px solid #e0e0e0"></div>
<svg class="a" style="left:16px;top:914.0px" width="12.00" height="16" viewBox="0 0 384 512"><path fill="#66993d" d="M377 105L279.1 7c-4.5-4.5-10.6-7-17-7H256v128h128v-6.1c0-6.3-2.5-12.4-7-16.9zm-153 31V0H24C10.7 0 0 10.7 0 24v464c0 13.3 10.7 24 24 24h336c13.3 0 24-10.7 24-24V160H248c-13.2 0-24-10.8-24-24zM64 72c0-4.42 3.58-8 8-8h80c4.42 0 8 3.58 8 8v16c0 4.42-3.58 8-8 8H72c-4.42 0-8-3.58-8-8V72zm0 80v-16c0-4.42 3.58-8 8-8h80c4.42 0 8 3.58 8 8v16c0 4.42-3.58 8-8 8H72c-4.42 0-8-3.58-8-8zm144 263.88V440c0 4.42-3.58 8-8 8h-16c-4.42 0-8-3.58-8-8v-24.29c-11.29-.58-22.27-4.52-31.37-11.35-3.9-2.93-4.1-8.77-.57-12.14l11.75-11.21c2.77-2.64 6.89-2.76 10.13-.73 3.87 2.42 8.26 3.72 12.820 3.72h28.11c6.5 0 11.8-5.92 11.8-13.19 0-5.95-3.61-11.19-8.77-12.73l-45-13.5c-18.59-5.58-31.58-23.42-31.58-43.39 0-24.52 19.05-44.44 42.67-45.07V232c0-4.42 3.58-8 8-8h16c4.42 0 8 3.58 8 8v24.29c11.29.58 22.27 4.51 31.37 11.35 3.9 2.93 4.1 8.77.57 12.14l-11.75 11.21c-2.77 2.64-6.89 2.76-10.13.73-3.87-2.43-8.26-3.72-12.82-3.72h-28.11c-6.5 0-11.8 5.92-11.8 13.19 0 5.95 3.61 11.19 8.77 12.73l45 13.5c18.59 5.58 31.58 23.42 31.58 43.39 0 24.53-19.05 44.44-42.67 45.07z"/></svg>
<span class="t" style="left:33.5px;top:913.52px;font-size:16px;color:#252e66;letter-spacing:0.046px;">FA2107-0003</span>
<svg class="a" style="left:132px;top:914.5px" width="16.80" height="16.8" viewBox="0 0 512 512"><path fill="#a5a5a5" d="M216 0h80c13.3 0 24 10.7 24 24v168h87.7c17.8 0 26.7 21.5 14.1 34.1L269.7 378.3c-7.5 7.5-19.8 7.5-27.3 0L90.1 226.1c-12.6-12.6-3.7-34.1 14.1-34.1H192V24c0-13.3 10.7-24 24-24zm296 376v112c0 13.3-10.7 24-24 24H24c-13.3 0-24-10.7-24-24V376c0-13.3 10.7-24 24-24h146.7l49 49c20.1 20.1 52.5 20.1 72.6 0l49-49H488c13.3 0 24 10.7 24 24zm-124 88c0-11-9-20-20-20s-20 9-20 20 9 20 20 20 20-9 20-20zm64 0c0-11-9-20-20-20s-20 9-20 20 9 20 20 20 20-9 20-20z"/></svg>
<span class="t" style="left:253.5px;transform:translateX(-50%);top:913.52px;font-size:16px;color:#222;">17/07/2021</span>
<span class="t" style="left:340.5px;top:913.52px;font-size:16px;color:#222;">18/07/2021</span>
<svg class="a" style="left:423.5px;top:913.25px" width="18.00" height="16" viewBox="0 0 576 512"><path fill="#bd9a2c" d="M569.517 440.013C587.975 472.007 564.806 512 527.94 512H48.054c-36.937 0-59.999-40.055-41.577-71.987L246.423 23.985c18.467-32.009 64.72-31.951 83.154 0l239.94 416.028zM288 354c-25.405 0-46 20.595-46 46s20.595 46 46 46 46-20.595 46-46-20.595-46-46-46zm-43.673-165.346l7.418 136c.347 6.364 5.609 11.346 11.982 11.346h48.546c6.373 0 11.635-4.982 11.982-11.346l7.418-136c.375-6.874-5.098-12.654-11.982-12.654h-63.383c-6.884 0-12.356 5.78-11.981 12.654z"/></svg>
<svg class="a" style="left:459.5px;top:915.4px" width="17.50" height="14" viewBox="0 0 640 512"><path fill="#6a68a8" d="M384 320H256c-17.67 0-32 14.33-32 32v128c0 17.67 14.33 32 32 32h128c17.67 0 32-14.33 32-32V352c0-17.67-14.33-32-32-32zM192 32c0-17.67-14.33-32-32-32H32C14.33 0 0 14.33 0 32v128c0 17.670 14.33 32 32 32h95.72l73.16 128.04C211.98 300.98 232.4 288 256 288h.28L192 175.51V128h224V64H192V32zM608 0H480c-17.67 0-32 14.33-32 32v128c0 17.67 14.33 32 32 32h128c17.67 0 32-14.33 32-32V32c0-17.67-14.33-32-32-32z"/></svg>
<span class="t" style="left:482.5px;top:913.52px;font-size:16px;color:#252e66;letter-spacing:0.094px;">PJ2107-0001_projet</span>
<svg class="a" style="left:636.9px;top:915.3px" width="14.2" height="14.6" viewBox="0 0 14.2 14.6"><path d="M1.2 0H12.9V13.6H14.2V14.6H0V13.6H1.2z" fill="url(#bg1)"/><g fill="#e4e2ff"><rect x="3.9" y="1" width="2.2" height="2.1"/><rect x="7.9" y="1" width="2.2" height="2.1"/><rect x="3.9" y="4.1" width="2.2" height="2.1"/><rect x="7.9" y="4.1" width="2.2" height="2.1"/><rect x="3.9" y="7.1" width="2.2" height="2.1"/><rect x="7.9" y="7.1" width="2.2" height="2.1"/></g><rect x="6" y="10.4" width="2.2" height="3.3" fill="#fff"/></svg>
<span class="t" style="left:655.5px;top:913.52px;font-size:16px;color:#252e66;letter-spacing:0.145px;">Tier_fournisseur_001</span>
<span class="t" style="right:776.5px;top:913.52px;font-size:16px;color:#1e6b6e;">1 164 000,00</span>
<span class="t" style="right:664px;top:913.52px;font-size:16px;color:#1e6b6e;">1 396 800,00</span>
<svg class="a" style="left:1275.5px;top:911.00px" width="20" height="23" viewBox="0 0 20 23"><path d="M10 0.5c3.4 0 5.6 2.6 5.6 6.2 0 3.6-2 7.2-5.6 7.2S4.4 10.3 4.4 6.7C4.4 3.1 6.6 0.5 10 0.5z" fill="url(#avg)"/><path d="M10 13.5c1.6 0 2.2 0.5 3.2 1.2C17 15.4 19.7 16.8 19.7 19.3 19.7 21.7 15.5 22.7 10 22.7S0.3 21.7 0.3 19.3C0.3 16.8 3 15.4 6.8 14.7 7.8 14 8.4 13.5 10 13.5z" fill="#595959"/></svg>
<span class="t" style="left:1300.5px;top:912.52px;font-size:16px;color:#252e66;letter-spacing:0.170px;">SuperAdmin</span>
<span class="t" style="right:400.5px;top:913.52px;font-size:16px;color:#222;">84035</span>
<span class="t" style="left:1538.5px;top:913.52px;font-size:16px;color:#222;">35087</span>
<div class="badge" style="left:1702px;top:910.00px;width:107px;height:25px;line-height:21.5px;border:2px solid #c9ab3c;color:#111;background:#fff">Commencée</div>
<div class="cb" style="left:1850px;top:914.40px"></div>
<div class="a" style="left:7px;top:944px;width:1890px;height:42px;background:#f8f8f8;border-bottom:1px solid #e0e0e0"></div>
<svg class="a" style="left:16px;top:956.0px" width="12.00" height="16" viewBox="0 0 384 512"><path fill="#66993d" d="M377 105L279.1 7c-4.5-4.5-10.6-7-17-7H256v128h128v-6.1c0-6.3-2.5-12.4-7-16.9zm-153 31V0H24C10.7 0 0 10.7 0 24v464c0 13.3 10.7 24 24 24h336c13.3 0 24-10.7 24-24V160H248c-13.2 0-24-10.8-24-24zM64 72c0-4.42 3.58-8 8-8h80c4.42 0 8 3.58 8 8v16c0 4.42-3.58 8-8 8H72c-4.42 0-8-3.58-8-8V72zm0 80v-16c0-4.42 3.58-8 8-8h80c4.42 0 8 3.58 8 8v16c0 4.42-3.58 8-8 8H72c-4.42 0-8-3.58-8-8zm144 263.88V440c0 4.42-3.58 8-8 8h-16c-4.42 0-8-3.58-8-8v-24.29c-11.29-.58-22.27-4.52-31.37-11.35-3.9-2.93-4.1-8.77-.57-12.14l11.75-11.21c2.77-2.64 6.89-2.76 10.13-.73 3.87 2.42 8.26 3.72 12.820 3.72h28.11c6.5 0 11.8-5.92 11.8-13.19 0-5.95-3.61-11.19-8.77-12.73l-45-13.5c-18.59-5.58-31.58-23.42-31.58-43.39 0-24.52 19.05-44.44 42.67-45.07V232c0-4.42 3.58-8 8-8h16c4.42 0 8 3.58 8 8v24.29c11.29.58 22.27 4.51 31.37 11.35 3.9 2.93 4.1 8.77.57 12.14l-11.75 11.21c-2.77 2.64-6.89 2.76-10.13.73-3.87-2.43-8.26-3.72-12.82-3.72h-28.11c-6.5 0-11.8 5.92-11.8 13.19 0 5.95 3.61 11.19 8.77 12.73l45 13.5c18.59 5.58 31.58 23.42 31.58 43.39 0 24.53-19.05 44.44-42.67 45.07z"/></svg>
<span class="t" style="left:33.5px;top:955.52px;font-size:16px;color:#252e66;letter-spacing:0.046px;">FA2107-0002</span>
<svg class="a" style="left:134.3px;top:954.6px" width="14.53" height="16.6" viewBox="0 0 448 512"><path fill="#b4b4b4" d="M448 348.106V80c0-26.51-21.49-48-48-48H48C21.49 32 0 53.49 0 80v351.988c0 26.51 21.49 48 48 48h268.118a48 48 0 0 0 33.941-14.059l83.882-83.882A48 48 0 0 0 448 348.106zm-128 80v-76.118h76.118L320 428.106zM400 80v223.988H296c-13.255 0-24 10.745-24 24v104H48V80h352z"/></svg>
<svg class="a" style="left:150.6px;top:956.5px" width="16.80" height="16.8" viewBox="0 0 512 512"><path fill="#a5a5a5" d="M216 0h80c13.3 0 24 10.7 24 24v168h87.7c17.8 0 26.7 21.5 14.1 34.1L269.7 378.3c-7.5 7.5-19.8 7.5-27.3 0L90.1 226.1c-12.6-12.6-3.7-34.1 14.1-34.1H192V24c0-13.3 10.7-24 24-24zm296 376v112c0 13.3-10.7 24-24 24H24c-13.3 0-24-10.7-24-24V376c0-13.3 10.7-24 24-24h146.7l49 49c20.1 20.1 52.5 20.1 72.6 0l49-49H488c13.3 0 24 10.7 24 24zm-124 88c0-11-9-20-20-20s-20 9-20 20 9 20 20 20 20-9 20-20zm64 0c0-11-9-20-20-20s-20 9-20 20 9 20 20 20 20-9 20-20z"/></svg>
<span class="t" style="left:253.5px;transform:translateX(-50%);top:955.52px;font-size:16px;color:#222;">17/07/2021</span>
<span class="t" style="left:340.5px;top:955.52px;font-size:16px;color:#222;">18/07/2021</span>
<svg class="a" style="left:423.5px;top:955.25px" width="18.00" height="16" viewBox="0 0 576 512"><path fill="#bd9a2c" d="M569.517 440.013C587.975 472.007 564.806 512 527.94 512H48.054c-36.937 0-59.999-40.055-41.577-71.987L246.423 23.985c18.467-32.009 64.72-31.951 83.154 0l239.94 416.028zM288 354c-25.405 0-46 20.595-46 46s20.595 46 46 46 46-20.595 46-46-20.595-46-46-46zm-43.673-165.346l7.418 136c.347 6.364 5.609 11.346 11.982 11.346h48.546c6.373 0 11.635-4.982 11.982-11.346l7.418-136c.375-6.874-5.098-12.654-11.982-12.654h-63.383c-6.884 0-12.356 5.78-11.981 12.654z"/></svg>
<svg class="a" style="left:459.5px;top:957.4px" width="17.50" height="14" viewBox="0 0 640 512"><path fill="#6a68a8" d="M384 320H256c-17.67 0-32 14.33-32 32v128c0 17.67 14.33 32 32 32h128c17.67 0 32-14.33 32-32V352c0-17.67-14.33-32-32-32zM192 32c0-17.67-14.33-32-32-32H32C14.33 0 0 14.33 0 32v128c0 17.670 14.33 32 32 32h95.72l73.16 128.04C211.98 300.98 232.4 288 256 288h.28L192 175.51V128h224V64H192V32zM608 0H480c-17.67 0-32 14.33-32 32v128c0 17.67 14.33 32 32 32h128c17.67 0 32-14.33 32-32V32c0-17.67-14.33-32-32-32z"/></svg>
<span class="t" style="left:482.5px;top:955.52px;font-size:16px;color:#252e66;letter-spacing:0.094px;">PJ2107-0001_projet</span>
<svg class="a" style="left:636.9px;top:957.3px" width="14.2" height="14.6" viewBox="0 0 14.2 14.6"><path d="M1.2 0H12.9V13.6H14.2V14.6H0V13.6H1.2z" fill="url(#bg1)"/><g fill="#e4e2ff"><rect x="3.9" y="1" width="2.2" height="2.1"/><rect x="7.9" y="1" width="2.2" height="2.1"/><rect x="3.9" y="4.1" width="2.2" height="2.1"/><rect x="7.9" y="4.1" width="2.2" height="2.1"/><rect x="3.9" y="7.1" width="2.2" height="2.1"/><rect x="7.9" y="7.1" width="2.2" height="2.1"/></g><rect x="6" y="10.4" width="2.2" height="3.3" fill="#fff"/></svg>
<span class="t" style="left:655.5px;top:955.52px;font-size:16px;color:#252e66;letter-spacing:0.145px;">Tier_fournisseur_001</span>
<span class="t" style="right:776.5px;top:955.52px;font-size:16px;color:#1e6b6e;">5 000,00</span>
<span class="t" style="right:664px;top:955.52px;font-size:16px;color:#1e6b6e;">6 000,00</span>
<svg class="a" style="left:1275.5px;top:953.00px" width="20" height="23" viewBox="0 0 20 23"><path d="M10 0.5c3.4 0 5.6 2.6 5.6 6.2 0 3.6-2 7.2-5.6 7.2S4.4 10.3 4.4 6.7C4.4 3.1 6.6 0.5 10 0.5z" fill="url(#avg)"/><path d="M10 13.5c1.6 0 2.2 0.5 3.2 1.2C17 15.4 19.7 16.8 19.7 19.3 19.7 21.7 15.5 22.7 10 22.7S0.3 21.7 0.3 19.3C0.3 16.8 3 15.4 6.8 14.7 7.8 14 8.4 13.5 10 13.5z" fill="#595959"/></svg>
<span class="t" style="left:1300.5px;top:954.52px;font-size:16px;color:#252e66;letter-spacing:0.170px;">SuperAdmin</span>
<span class="t" style="right:400.5px;top:955.52px;font-size:16px;color:#222;">120</span>
<span class="t" style="left:1538.5px;top:955.52px;font-size:16px;color:#222;">300</span>
<div class="badge" style="left:1702px;top:952.00px;width:107px;height:25px;line-height:21.5px;border:2px solid #c9ab3c;color:#111;background:#fff">Commencée</div>
<div class="cb" style="left:1850px;top:956.40px"></div>
<div class="a" style="left:7px;top:986px;width:1890px;height:42px;background:#fff;border-bottom:1px solid #e0e0e0"></div>
<svg class="a" style="left:16px;top:998.0px" width="12.00" height="16" viewBox="0 0 384 512"><path fill="#66993d" d="M377 105L279.1 7c-4.5-4.5-10.6-7-17-7H256v128h128v-6.1c0-6.3-2.5-12.4-7-16.9zm-153 31V0H24C10.7 0 0 10.7 0 24v464c0 13.3 10.7 24 24 24h336c13.3 0 24-10.7 24-24V160H248c-13.2 0-24-10.8-24-24zM64 72c0-4.42 3.58-8 8-8h80c4.42 0 8 3.58 8 8v16c0 4.42-3.58 8-8 8H72c-4.42 0-8-3.58-8-8V72zm0 80v-16c0-4.42 3.58-8 8-8h80c4.42 0 8 3.58 8 8v16c0 4.42-3.58 8-8 8H72c-4.42 0-8-3.58-8-8zm144 263.88V440c0 4.42-3.58 8-8 8h-16c-4.42 0-8-3.58-8-8v-24.29c-11.29-.58-22.27-4.52-31.37-11.35-3.9-2.93-4.1-8.77-.57-12.14l11.75-11.21c2.77-2.64 6.89-2.76 10.13-.73 3.87 2.42 8.26 3.72 12.820 3.72h28.11c6.5 0 11.8-5.92 11.8-13.19 0-5.95-3.61-11.19-8.77-12.73l-45-13.5c-18.59-5.58-31.58-23.42-31.58-43.39 0-24.52 19.05-44.44 42.67-45.07V232c0-4.42 3.58-8 8-8h16c4.42 0 8 3.58 8 8v24.29c11.29.58 22.27 4.51 31.37 11.35 3.9 2.93 4.1 8.77.57 12.14l-11.75 11.21c-2.77 2.64-6.89 2.76-10.13.73-3.87-2.43-8.26-3.72-12.82-3.72h-28.11c-6.5 0-11.8 5.92-11.8 13.19 0 5.95 3.61 11.19 8.77 12.73l45 13.5c18.59 5.58 31.58 23.42 31.58 43.39 0 24.53-19.05 44.44-42.67 45.07z"/></svg>
<span class="t" style="left:33.5px;top:997.52px;font-size:16px;color:#252e66;letter-spacing:0.046px;">FA2107-0001</span>
<svg class="a" style="left:132px;top:998.5px" width="16.80" height="16.8" viewBox="0 0 512 512"><path fill="#a5a5a5" d="M216 0h80c13.3 0 24 10.7 24 24v168h87.7c17.8 0 26.7 21.5 14.1 34.1L269.7 378.3c-7.5 7.5-19.8 7.5-27.3 0L90.1 226.1c-12.6-12.6-3.7-34.1 14.1-34.1H192V24c0-13.3 10.7-24 24-24zm296 376v112c0 13.3-10.7 24-24 24H24c-13.3 0-24-10.7-24-24V376c0-13.3 10.7-24 24-24h146.7l49 49c20.1 20.1 52.5 20.1 72.6 0l49-49H488c13.3 0 24 10.7 24 24zm-124 88c0-11-9-20-20-20s-20 9-20 20 9 20 20 20 20-9 20-20zm64 0c0-11-9-20-20-20s-20 9-20 20 9 20 20 20 20-9 20-20z"/></svg>
<span class="t" style="left:253.5px;transform:translateX(-50%);top:997.52px;font-size:16px;color:#222;">15/07/2021</span>
<span class="t" style="left:391px;transform:translateX(-50%);top:997.52px;font-size:16px;color:#222;">16/07/2021</span>
<svg class="a" style="left:636.9px;top:999.3px" width="14.2" height="14.6" viewBox="0 0 14.2 14.6"><path d="M1.2 0H12.9V13.6H14.2V14.6H0V13.6H1.2z" fill="url(#bg1)"/><g fill="#e4e2ff"><rect x="3.9" y="1" width="2.2" height="2.1"/><rect x="7.9" y="1" width="2.2" height="2.1"/><rect x="3.9" y="4.1" width="2.2" height="2.1"/><rect x="7.9" y="4.1" width="2.2" height="2.1"/><rect x="3.9" y="7.1" width="2.2" height="2.1"/><rect x="7.9" y="7.1" width="2.2" height="2.1"/></g><rect x="6" y="10.4" width="2.2" height="3.3" fill="#fff"/></svg>
<span class="t" style="left:655.5px;top:997.52px;font-size:16px;color:#252e66;letter-spacing:0.094px;">Tier_0002</span>
<span class="t" style="right:776.5px;top:997.52px;font-size:16px;color:#1e6b6e;">400,00</span>
<span class="t" style="right:664px;top:997.52px;font-size:16px;color:#1e6b6e;">480,00</span>
<svg class="a" style="left:1275.5px;top:995.00px" width="20" height="23" viewBox="0 0 20 23"><path d="M10 0.5c3.4 0 5.6 2.6 5.6 6.2 0 3.6-2 7.2-5.6 7.2S4.4 10.3 4.4 6.7C4.4 3.1 6.6 0.5 10 0.5z" fill="url(#avg)"/><path d="M10 13.5c1.6 0 2.2 0.5 3.2 1.2C17 15.4 19.7 16.8 19.7 19.3 19.7 21.7 15.5 22.7 10 22.7S0.3 21.7 0.3 19.3C0.3 16.8 3 15.4 6.8 14.7 7.8 14 8.4 13.5 10 13.5z" fill="#595959"/></svg>
<span class="t" style="left:1300.5px;top:996.52px;font-size:16px;color:#252e66;letter-spacing:0.170px;">SuperAdmin</span>
<div class="badge" style="left:1749px;top:994.00px;width:60px;height:25px;border:none;line-height:25px;color:#8a8a8a;background:#c9cfcf">Payée</div>
<div class="cb" style="left:1850px;top:998.40px"></div>
<div class="a" style="left:7px;top:1028px;width:1890px;height:36px;background:#f8f8f8"></div>
<span class="t" style="left:17px;top:1040.52px;font-size:16px;color:#888;letter-spacing:0.170px;">Total</span>
<span class="t" style="right:776.5px;top:1040.52px;font-size:16px;color:#888;">1 031 900,00</span>
<span class="t" style="right:664px;top:1040.52px;font-size:16px;color:#888;">1 238 280,00</span>
<div class="a" style="left:494px;top:182px;width:236px;height:564px;background:#fafafa;box-shadow:0 4px 16px rgba(0,0,0,0.36)"></div>
<div class="a" style="left:709px;top:182px;width:21px;height:564px;background:#f1f1f1"></div>
<div class="a" style="left:711px;top:201px;width:17px;height:352px;background:#c1c1c1"></div>
<svg class="a" style="left:714.5px;top:188.5px" width="10" height="6"><polygon points="0,5.5 5,0 10,5.5" fill="#a3a3a3"/></svg>
<svg class="a" style="left:714.5px;top:731.5px" width="10" height="6"><polygon points="0,0 5,5.5 10,0" fill="#505050"/></svg>
<svg class="a" style="left:503px;top:195.5px" width="11.62" height="15.5" viewBox="0 0 384 512"><path fill="#66993d" d="M377 105L279.1 7c-4.5-4.5-10.6-7-17-7H256v128h128v-6.1c0-6.3-2.5-12.4-7-16.9zm-153 31V0H24C10.7 0 0 10.7 0 24v464c0 13.3 10.7 24 24 24h336c13.3 0 24-10.7 24-24V160H248c-13.2 0-24-10.8-24-24zM64 72c0-4.42 3.58-8 8-8h80c4.42 0 8 3.58 8 8v16c0 4.42-3.58 8-8 8H72c-4.42 0-8-3.58-8-8V72zm0 80v-16c0-4.42 3.58-8 8-8h80c4.42 0 8 3.58 8 8v16c0 4.42-3.58 8-8 8H72c-4.42 0-8-3.58-8-8zm144 263.88V440c0 4.42-3.58 8-8 8h-16c-4.42 0-8-3.58-8-8v-24.29c-11.29-.58-22.27-4.52-31.37-11.35-3.9-2.93-4.1-8.77-.57-12.14l11.75-11.21c2.77-2.64 6.89-2.76 10.13-.73 3.87 2.42 8.26 3.72 12.820 3.72h28.11c6.5 0 11.8-5.92 11.8-13.19 0-5.95-3.61-11.19-8.77-12.73l-45-13.5c-18.59-5.58-31.58-23.42-31.58-43.39 0-24.52 19.05-44.44 42.67-45.07V232c0-4.42 3.58-8 8-8h16c4.42 0 8 3.58 8 8v24.29c11.29.58 22.27 4.51 31.37 11.35 3.9 2.93 4.1 8.77.57 12.14l-11.75 11.21c-2.77 2.64-6.89 2.76-10.13.73-3.87-2.43-8.26-3.72-12.82-3.72h-28.11c-6.5 0-11.8 5.92-11.8 13.19 0 5.95 3.61 11.19 8.77 12.73l45 13.5c18.59 5.58 31.58 23.42 31.58 43.39 0 24.53-19.05 44.44-42.67 45.07z"/></svg>
<span class="t" style="left:526.5px;top:195.97px;font-size:14.4px;color:#111;font-weight:bold;letter-spacing:0.143px;">Factures clients</span>
<span class="t" style="left:503.5px;top:224.67px;font-size:14.4px;color:#111;letter-spacing:0.143px;">Nouvelle facture</span>
<span class="t" style="left:503.5px;top:251.47px;font-size:14.4px;color:#111;letter-spacing:0.153px;">Liste</span>
<span class="t" style="left:515.5px;top:278.27px;font-size:14.4px;color:#111;letter-spacing:0.153px;">Brouillon</span>
<span class="t" style="left:515.5px;top:305.07px;font-size:14.4px;color:#111;letter-spacing:0.153px;">Impayée</span>
<span class="t" style="left:515.5px;top:331.87px;font-size:14.4px;color:#111;letter-spacing:0.153px;">Payée</span>
<span class="t" style="left:515.5px;top:358.67px;font-size:14.4px;color:#111;letter-spacing:0.153px;">Abandonnée</span>
<span class="t" style="left:503.5px;top:385.47px;font-size:14.4px;color:#111;letter-spacing:0.135px;">Liste des modèles</span>
<span class="t" style="left:503.5px;top:412.27px;font-size:14.4px;color:#111;letter-spacing:0.153px;">Règlements</span>
<span class="t" style="left:515.5px;top:439.07px;font-size:14.4px;color:#111;letter-spacing:0.153px;">Rapports</span>
<span class="t" style="left:503.5px;top:465.87px;font-size:14.4px;color:#111;letter-spacing:0.153px;">Statistiques</span>
<div class="a" style="left:497px;top:495px;width:212px;height:1px;background:#e2e2e2"></div>
<svg class="a" style="left:503px;top:510.5px" width="11.62" height="15.5" viewBox="0 0 384 512"><path fill="#6ea4b0" d="M377 105L279.1 7c-4.5-4.5-10.6-7-17-7H256v128h128v-6.1c0-6.3-2.5-12.4-7-16.9zm-153 31V0H24C10.7 0 0 10.7 0 24v464c0 13.3 10.7 24 24 24h336c13.3 0 24-10.7 24-24V160H248c-13.2 0-24-10.8-24-24zM64 72c0-4.42 3.58-8 8-8h80c4.42 0 8 3.58 8 8v16c0 4.42-3.58 8-8 8H72c-4.42 0-8-3.58-8-8V72zm0 80v-16c0-4.42 3.58-8 8-8h80c4.42 0 8 3.58 8 8v16c0 4.42-3.58 8-8 8H72c-4.42 0-8-3.58-8-8zm144 263.88V440c0 4.42-3.58 8-8 8h-16c-4.42 0-8-3.58-8-8v-24.29c-11.29-.58-22.27-4.52-31.37-11.35-3.9-2.93-4.1-8.77-.57-12.14l11.75-11.21c2.77-2.64 6.89-2.76 10.13-.73 3.87 2.42 8.26 3.72 12.820 3.72h28.11c6.5 0 11.8-5.92 11.8-13.19 0-5.95-3.61-11.19-8.77-12.73l-45-13.5c-18.59-5.58-31.58-23.42-31.58-43.39 0-24.52 19.05-44.44 42.67-45.07V232c0-4.42 3.58-8 8-8h16c4.42 0 8 3.58 8 8v24.29c11.29.58 22.27 4.51 31.37 11.35 3.9 2.93 4.1 8.77.57 12.14l-11.75 11.21c-2.77 2.64-6.89 2.76-10.13.73-3.87-2.43-8.26-3.72-12.82-3.72h-28.11c-6.5 0-11.8 5.92-11.8 13.19 0 5.95 3.61 11.19 8.77 12.73l45 13.5c18.59 5.58 31.58 23.42 31.58 43.39 0 24.53-19.05 44.44-42.67 45.07z"/></svg>
<span class="t" style="left:526.5px;top:510.77px;font-size:14.4px;color:#111;font-weight:bold;letter-spacing:0.145px;">Factures fournisseur</span>
<span class="t" style="left:503.5px;top:539.67px;font-size:14.4px;color:#111;letter-spacing:0.143px;">Nouvelle facture</span>
<span class="t" style="left:503.5px;top:566.47px;font-size:14.4px;color:#111;letter-spacing:0.153px;">Liste</span>
<span class="t" style="left:515.5px;top:593.27px;font-size:14.4px;color:#111;letter-spacing:0.153px;">Brouillon</span>
<span class="t" style="left:515.5px;top:620.07px;font-size:14.4px;color:#111;letter-spacing:0.153px;">Impayée</span>
<span class="t" style="left:515.5px;top:646.87px;font-size:14.4px;color:#111;letter-spacing:0.153px;">Payée</span>
<span class="t" style="left:503.5px;top:673.67px;font-size:14.4px;color:#111;letter-spacing:0.153px;">Règlements</span>
<span class="t" style="left:515.5px;top:700.47px;font-size:14.4px;color:#111;letter-spacing:0.153px;">Rapports</span>
<span class="t" style="left:503.5px;top:727.27px;font-size:14.4px;color:#111;letter-spacing:0.153px;">Statistiques</span>
</body></html>
